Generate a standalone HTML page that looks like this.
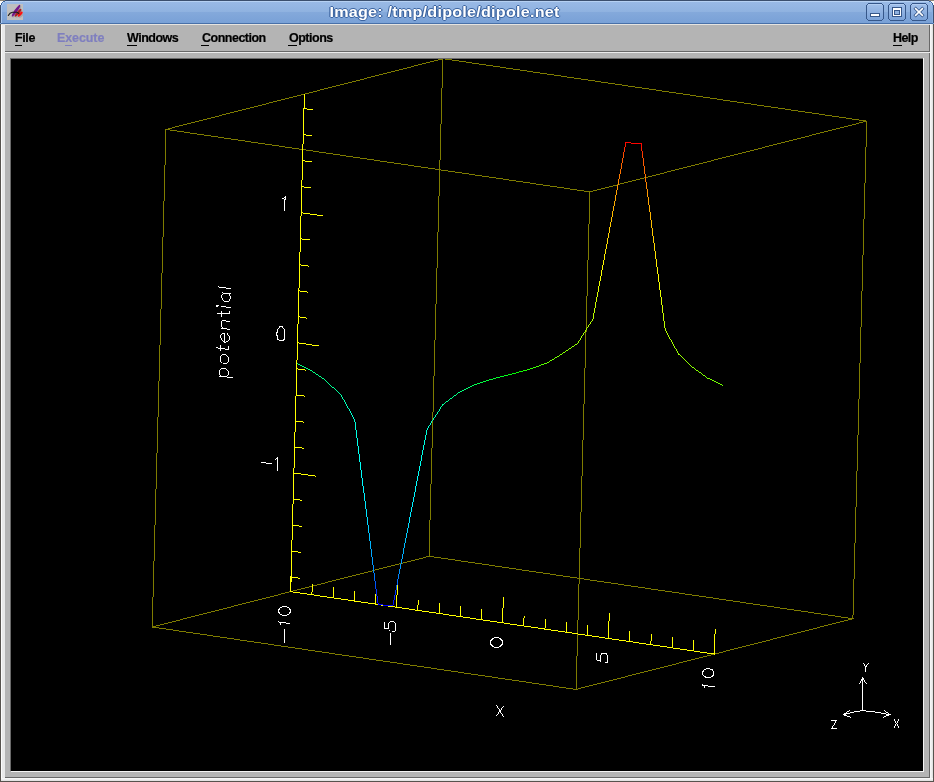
<!DOCTYPE html>
<html><head><meta charset="utf-8"><style>
*{margin:0;padding:0;box-sizing:border-box}
html,body{width:934px;height:782px;overflow:hidden;background:#b4b4b4}
body{position:relative;font-family:"Liberation Sans",sans-serif}
.abs{position:absolute}
#ttext{left:23px;width:843px;top:4px;text-align:center;color:#fff;font-weight:bold;font-size:14.5px;line-height:17px;letter-spacing:0.2px;transform:scaleX(1.115);transform-origin:center;text-shadow:1px 0 0 #3c64a0,-1px 0 0 #3c64a0,0 1px 0 #3c64a0,0 -1px 0 #3c64a0;will-change:transform}
.btn{top:3px;width:18px;height:18px;border:1px solid #37598b;border-radius:4px;background:linear-gradient(#9cbcea,#7ea5da)}
.mi{top:31px;font-weight:bold;font-size:12.5px;line-height:15px;color:#000;letter-spacing:-0.2px;-webkit-text-stroke:0.2px #000;will-change:transform}
.ul{height:1px;background:#000}
.plot{position:absolute;left:0;top:0}
</style></head><body>
<div class="abs" style="left:0px;top:23px;width:1px;height:759px;background:#57534e"></div><div class="abs" style="left:933px;top:23px;width:1px;height:759px;background:#57534e"></div><div class="abs" style="left:0px;top:781px;width:934px;height:1px;background:#57534e"></div><div class="abs" style="left:1px;top:24px;width:1px;height:757px;background:#fcfcfc"></div><div class="abs" style="left:2px;top:25px;width:3px;height:755px;background:#e9e9e9"></div><div class="abs" style="left:1px;top:24px;width:932px;height:1px;background:#e6e4e0"></div><div class="abs" style="left:930px;top:24px;width:1px;height:757px;background:#f6f6f6"></div><div class="abs" style="left:931px;top:24px;width:1px;height:757px;background:#eeeeee"></div><div class="abs" style="left:932px;top:24px;width:1px;height:757px;background:#e2e2e2"></div><div class="abs" style="left:1px;top:778px;width:932px;height:1px;background:#f6f6f6"></div><div class="abs" style="left:1px;top:779px;width:932px;height:1px;background:#eeeeee"></div><div class="abs" style="left:1px;top:780px;width:932px;height:1px;background:#e2e2e2"></div><div class="abs" style="left:929px;top:25px;width:1px;height:753px;background:#686868"></div><div class="abs" style="left:5px;top:777px;width:925px;height:1px;background:#686868"></div><div class="abs" style="left:5px;top:51px;width:924px;height:1px;background:#686868"></div><div class="abs" style="left:5px;top:52px;width:925px;height:1px;background:#ececec"></div><div class="abs" style="left:10px;top:58px;width:913px;height:1px;background:#6a6a6a"></div><div class="abs" style="left:10px;top:58px;width:1px;height:713px;background:#6a6a6a"></div><div class="abs" style="left:923px;top:58px;width:1px;height:714px;background:#f4f4f4"></div><div class="abs" style="left:11px;top:771px;width:913px;height:1px;background:#f4f4f4"></div><div class="abs" style="left:11px;top:59px;width:912px;height:712px;background:#000"></div>
<svg class="abs" style="left:0;top:0" width="934" height="24" shape-rendering="crispEdges"><defs><linearGradient id="tg" x1="0" y1="0" x2="0" y2="24" gradientUnits="userSpaceOnUse"><stop offset="0" stop-color="#9bbbe7"/><stop offset="0.5" stop-color="#8fb2e0"/><stop offset="0.5" stop-color="#84a9db"/><stop offset="1" stop-color="#78a0d6"/></linearGradient><linearGradient id="bg" x1="0" y1="4" x2="0" y2="20" gradientUnits="userSpaceOnUse"><stop offset="0" stop-color="#a2c0ea"/><stop offset="1" stop-color="#7ba2d8"/></linearGradient></defs><rect x="0" y="0" width="934" height="24" fill="url(#tg)"/><rect x="0" y="0" width="5" height="1" fill="#8c8274"/><rect x="929" y="0" width="5" height="1" fill="#8c8274"/><rect x="5" y="0" width="924" height="1" fill="#3b4f6e"/><rect x="5" y="1" width="924" height="1" fill="#b6d1f3"/><rect x="0" y="1" width="1" height="1" fill="#fbfbfa"/><rect x="933" y="1" width="1" height="1" fill="#fbfbfa"/><rect x="1" y="1" width="1" height="1" fill="#fbfbfa"/><rect x="932" y="1" width="1" height="1" fill="#fbfbfa"/><rect x="2" y="1" width="1" height="1" fill="#fbfbfa"/><rect x="931" y="1" width="1" height="1" fill="#fbfbfa"/><rect x="0" y="2" width="1" height="1" fill="#fbfbfa"/><rect x="933" y="2" width="1" height="1" fill="#fbfbfa"/><rect x="1" y="2" width="1" height="1" fill="#fbfbfa"/><rect x="932" y="2" width="1" height="1" fill="#fbfbfa"/><rect x="0" y="3" width="1" height="1" fill="#fbfbfa"/><rect x="933" y="3" width="1" height="1" fill="#fbfbfa"/><rect x="0" y="4" width="1" height="1" fill="#fbfbfa"/><rect x="933" y="4" width="1" height="1" fill="#fbfbfa"/><rect x="3" y="1" width="1" height="1" fill="#3d69a6"/><rect x="930" y="1" width="1" height="1" fill="#3d69a6"/><rect x="4" y="1" width="1" height="1" fill="#3d69a6"/><rect x="929" y="1" width="1" height="1" fill="#3d69a6"/><rect x="2" y="2" width="1" height="1" fill="#3d69a6"/><rect x="931" y="2" width="1" height="1" fill="#3d69a6"/><rect x="1" y="3" width="1" height="1" fill="#3d69a6"/><rect x="932" y="3" width="1" height="1" fill="#3d69a6"/><rect x="1" y="4" width="1" height="1" fill="#3d69a6"/><rect x="932" y="4" width="1" height="1" fill="#3d69a6"/><rect x="3" y="2" width="1" height="1" fill="#b6d1f3"/><rect x="930" y="2" width="1" height="1" fill="#b6d1f3"/><rect x="2" y="3" width="1" height="1" fill="#aac8f0"/><rect x="931" y="3" width="1" height="1" fill="#aac8f0"/><rect x="2" y="4" width="1" height="1" fill="#aac8f0"/><rect x="931" y="4" width="1" height="1" fill="#aac8f0"/><rect x="0" y="5" width="1" height="18" fill="#3b4f6e"/><rect x="933" y="5" width="1" height="18" fill="#3b4f6e"/><rect x="1" y="5" width="1" height="18" fill="#a9c7ef"/><rect x="932" y="5" width="1" height="18" fill="#86aee2"/><rect x="1" y="23" width="932" height="1" fill="#4870a8"/><rect x="867" y="4" width="16" height="16" fill="url(#bg)"/><rect x="868" y="4" width="14" height="1" fill="#b3cef2"/><rect x="868" y="3" width="14" height="1" fill="#36578a"/><rect x="868" y="20" width="14" height="1" fill="#36578a"/><rect x="866" y="5" width="1" height="14" fill="#36578a"/><rect x="883" y="5" width="1" height="14" fill="#36578a"/><rect x="867" y="4" width="1" height="1" fill="#36578a"/><rect x="882" y="4" width="1" height="1" fill="#36578a"/><rect x="867" y="19" width="1" height="1" fill="#36578a"/><rect x="882" y="19" width="1" height="1" fill="#36578a"/><rect x="889" y="4" width="16" height="16" fill="url(#bg)"/><rect x="890" y="4" width="14" height="1" fill="#b3cef2"/><rect x="890" y="3" width="14" height="1" fill="#36578a"/><rect x="890" y="20" width="14" height="1" fill="#36578a"/><rect x="888" y="5" width="1" height="14" fill="#36578a"/><rect x="905" y="5" width="1" height="14" fill="#36578a"/><rect x="889" y="4" width="1" height="1" fill="#36578a"/><rect x="904" y="4" width="1" height="1" fill="#36578a"/><rect x="889" y="19" width="1" height="1" fill="#36578a"/><rect x="904" y="19" width="1" height="1" fill="#36578a"/><rect x="911" y="4" width="16" height="16" fill="url(#bg)"/><rect x="912" y="4" width="14" height="1" fill="#b3cef2"/><rect x="912" y="3" width="14" height="1" fill="#36578a"/><rect x="912" y="20" width="14" height="1" fill="#36578a"/><rect x="910" y="5" width="1" height="14" fill="#36578a"/><rect x="927" y="5" width="1" height="14" fill="#36578a"/><rect x="911" y="4" width="1" height="1" fill="#36578a"/><rect x="926" y="4" width="1" height="1" fill="#36578a"/><rect x="911" y="19" width="1" height="1" fill="#36578a"/><rect x="926" y="19" width="1" height="1" fill="#36578a"/><rect x="870" y="13" width="10" height="4" fill="#36578a"/><rect x="871" y="14" width="8" height="2" fill="#ffffff"/><rect x="892" y="7" width="10" height="10" fill="#36578a"/><rect x="893" y="8" width="8" height="8" fill="#ffffff"/><rect x="894" y="10" width="6" height="5" fill="#36578a"/><rect x="895" y="11" width="4" height="3" fill="#8fb1df"/><g shape-rendering="auto"><path d="M914.6 7.6 L923.4 16.4 M923.4 7.6 L914.6 16.4" stroke="#36578a" stroke-width="3.2"/><path d="M915.1 8.1 L922.9 15.9 M922.9 8.1 L915.1 15.9" stroke="#fff" stroke-width="1.6"/></g></svg>
<div class="abs" style="left:7px;top:4px;width:16px;height:16px;background:#bfbfbf">
<svg width="16" height="16" viewBox="0 0 16 16"><ellipse cx="9.90" cy="7.80" rx="7.12" ry="1.75" fill="#8a8a8a" opacity="0.45" transform="rotate(125.6 9.90 7.80)"/><ellipse cx="11.95" cy="9.85" rx="4.86" ry="1.65" fill="#8a8a8a" opacity="0.45" transform="rotate(130.2 11.95 9.85)"/><ellipse cx="14.10" cy="11.25" rx="3.18" ry="1.60" fill="#8a8a8a" opacity="0.45" transform="rotate(134.2 14.10 11.25)"/><ellipse cx="9.00" cy="6.70" rx="7.12" ry="1.45" fill="#74168a" opacity="1" transform="rotate(125.6 9.00 6.70)"/><ellipse cx="11.05" cy="8.75" rx="4.86" ry="1.35" fill="#a81c1c" opacity="1" transform="rotate(130.2 11.05 8.75)"/><ellipse cx="13.20" cy="10.15" rx="3.18" ry="1.30" fill="#ff1010" opacity="1" transform="rotate(134.2 13.20 10.15)"/><path d="M1.3 11.5 C2.3 9.4 3.6 8.4 5.5 8.2 L9.6 8.3 C10.8 8.5 11.5 9.0 12.0 9.8" stroke="#1c1c1c" stroke-width="1.1" fill="none" stroke-linecap="round"/></svg></div>
<div id="ttext" class="abs">Image: /tmp/dipole/dipole.net</div>
<div class="mi abs" style="left:15px;letter-spacing:-0.4px">File</div>
<div class="ul abs" style="left:15px;top:45px;width:7px"></div>
<div class="mi abs" style="left:57px;letter-spacing:-0.1px;color:#7f7fbf;-webkit-text-stroke:0.2px #7f7fbf">Execute</div>
<div class="ul abs" style="left:65px;top:45px;width:7px;background:#7f7fbf"></div>
<div class="mi abs" style="left:127px;letter-spacing:-0.5px">Windows</div>
<div class="ul abs" style="left:127px;top:45px;width:10px"></div>
<div class="mi abs" style="left:202px;letter-spacing:-0.5px">Connection</div>
<div class="ul abs" style="left:201px;top:45px;width:8px"></div>
<div class="mi abs" style="left:289px;letter-spacing:-0.5px">Options</div>
<div class="ul abs" style="left:288px;top:45px;width:9px"></div>
<div class="mi abs" style="left:893px;letter-spacing:-0.6px">Help</div>
<div class="ul abs" style="left:893px;top:45px;width:9px"></div>
<svg class="plot" width="934" height="782" viewBox="0 0 934 782"><defs><clipPath id="cv"><rect x="11" y="59" width="912" height="712"/></clipPath></defs><g clip-path="url(#cv)" shape-rendering="crispEdges"><path fill="#7f7c00" d="M442 58h3v1h-3zM438 59h5v1h-5zM445 59h7v1h-7zM434 60h4v1h-4zM442 60h1v1h-1zM452 60h7v1h-7zM430 61h4v1h-4zM442 61h1v1h-1zM459 61h7v1h-7zM426 62h4v1h-4zM442 62h1v1h-1zM466 62h6v1h-6zM422 63h4v1h-4zM442 63h1v1h-1zM472 63h7v1h-7zM418 64h4v1h-4zM442 64h1v1h-1zM479 64h7v1h-7zM414 65h4v1h-4zM442 65h1v1h-1zM486 65h7v1h-7zM411 66h3v1h-3zM442 66h1v1h-1zM493 66h7v1h-7zM407 67h4v1h-4zM442 67h1v1h-1zM500 67h6v1h-6zM403 68h4v1h-4zM442 68h1v1h-1zM506 68h7v1h-7zM399 69h4v1h-4zM442 69h1v1h-1zM513 69h7v1h-7zM395 70h4v1h-4zM442 70h1v1h-1zM520 70h7v1h-7zM391 71h4v1h-4zM442 71h1v1h-1zM527 71h6v1h-6zM387 72h4v1h-4zM442 72h1v1h-1zM533 72h7v1h-7zM383 73h4v1h-4zM442 73h1v1h-1zM540 73h7v1h-7zM379 74h4v1h-4zM442 74h1v1h-1zM547 74h7v1h-7zM375 75h4v1h-4zM442 75h1v1h-1zM554 75h7v1h-7zM371 76h4v1h-4zM442 76h1v1h-1zM561 76h6v1h-6zM367 77h4v1h-4zM442 77h1v1h-1zM567 77h7v1h-7zM364 78h3v1h-3zM442 78h1v1h-1zM574 78h7v1h-7zM360 79h4v1h-4zM442 79h1v1h-1zM581 79h7v1h-7zM356 80h4v1h-4zM442 80h1v1h-1zM588 80h7v1h-7zM352 81h4v1h-4zM442 81h1v1h-1zM595 81h6v1h-6zM348 82h4v1h-4zM442 82h1v1h-1zM601 82h7v1h-7zM344 83h4v1h-4zM442 83h1v1h-1zM608 83h7v1h-7zM340 84h4v1h-4zM442 84h1v1h-1zM615 84h7v1h-7zM336 85h4v1h-4zM442 85h1v1h-1zM622 85h6v1h-6zM332 86h4v1h-4zM442 86h1v1h-1zM628 86h7v1h-7zM328 87h4v1h-4zM442 87h1v1h-1zM635 87h7v1h-7zM324 88h4v1h-4zM441 88h1v1h-1zM642 88h7v1h-7zM320 89h4v1h-4zM441 89h1v1h-1zM649 89h7v1h-7zM317 90h3v1h-3zM441 90h1v1h-1zM656 90h6v1h-6zM313 91h4v1h-4zM441 91h1v1h-1zM662 91h7v1h-7zM309 92h4v1h-4zM441 92h1v1h-1zM669 92h7v1h-7zM305 93h4v1h-4zM441 93h1v1h-1zM676 93h7v1h-7zM301 94h4v1h-4zM441 94h1v1h-1zM683 94h7v1h-7zM297 95h4v1h-4zM441 95h1v1h-1zM690 95h6v1h-6zM293 96h4v1h-4zM441 96h1v1h-1zM696 96h7v1h-7zM289 97h4v1h-4zM441 97h1v1h-1zM703 97h7v1h-7zM285 98h4v1h-4zM441 98h1v1h-1zM710 98h7v1h-7zM281 99h4v1h-4zM441 99h1v1h-1zM717 99h6v1h-6zM277 100h4v1h-4zM441 100h1v1h-1zM723 100h7v1h-7zM273 101h4v1h-4zM441 101h1v1h-1zM730 101h7v1h-7zM269 102h4v1h-4zM441 102h1v1h-1zM737 102h7v1h-7zM266 103h3v1h-3zM441 103h1v1h-1zM744 103h7v1h-7zM262 104h4v1h-4zM441 104h1v1h-1zM751 104h6v1h-6zM258 105h4v1h-4zM441 105h1v1h-1zM757 105h7v1h-7zM254 106h4v1h-4zM441 106h1v1h-1zM764 106h7v1h-7zM250 107h4v1h-4zM441 107h1v1h-1zM771 107h7v1h-7zM246 108h4v1h-4zM441 108h1v1h-1zM778 108h7v1h-7zM242 109h4v1h-4zM441 109h1v1h-1zM785 109h6v1h-6zM238 110h4v1h-4zM441 110h1v1h-1zM791 110h7v1h-7zM234 111h4v1h-4zM441 111h1v1h-1zM798 111h7v1h-7zM230 112h4v1h-4zM441 112h1v1h-1zM805 112h7v1h-7zM226 113h4v1h-4zM441 113h1v1h-1zM812 113h7v1h-7zM222 114h4v1h-4zM441 114h1v1h-1zM819 114h6v1h-6zM219 115h3v1h-3zM441 115h1v1h-1zM825 115h7v1h-7zM215 116h4v1h-4zM441 116h1v1h-1zM832 116h7v1h-7zM211 117h4v1h-4zM441 117h1v1h-1zM839 117h7v1h-7zM207 118h4v1h-4zM441 118h1v1h-1zM846 118h6v1h-6zM203 119h4v1h-4zM441 119h1v1h-1zM852 119h7v1h-7zM199 120h4v1h-4zM441 120h1v1h-1zM859 120h7v1h-7zM195 121h4v1h-4zM441 121h1v1h-1zM863 121h4v1h-4zM191 122h4v1h-4zM441 122h1v1h-1zM859 122h4v1h-4zM866 122h1v1h-1zM187 123h4v1h-4zM441 123h1v1h-1zM856 123h3v1h-3zM866 123h1v1h-1zM183 124h4v1h-4zM440 124h1v1h-1zM852 124h4v1h-4zM866 124h1v1h-1zM179 125h4v1h-4zM440 125h1v1h-1zM848 125h4v1h-4zM866 125h1v1h-1zM175 126h4v1h-4zM440 126h1v1h-1zM844 126h4v1h-4zM866 126h1v1h-1zM172 127h3v1h-3zM440 127h1v1h-1zM840 127h4v1h-4zM866 127h1v1h-1zM168 128h4v1h-4zM440 128h1v1h-1zM836 128h4v1h-4zM866 128h1v1h-1zM165 129h5v1h-5zM440 129h1v1h-1zM832 129h4v1h-4zM866 129h1v1h-1zM165 130h1v1h-1zM170 130h7v1h-7zM440 130h1v1h-1zM828 130h4v1h-4zM866 130h1v1h-1zM165 131h1v1h-1zM177 131h7v1h-7zM440 131h1v1h-1zM824 131h4v1h-4zM866 131h1v1h-1zM165 132h1v1h-1zM184 132h6v1h-6zM440 132h1v1h-1zM820 132h4v1h-4zM866 132h1v1h-1zM165 133h1v1h-1zM190 133h7v1h-7zM440 133h1v1h-1zM816 133h4v1h-4zM866 133h1v1h-1zM165 134h1v1h-1zM197 134h7v1h-7zM440 134h1v1h-1zM812 134h4v1h-4zM866 134h1v1h-1zM165 135h1v1h-1zM204 135h7v1h-7zM440 135h1v1h-1zM809 135h3v1h-3zM866 135h1v1h-1zM165 136h1v1h-1zM211 136h7v1h-7zM440 136h1v1h-1zM805 136h4v1h-4zM866 136h1v1h-1zM165 137h1v1h-1zM218 137h6v1h-6zM440 137h1v1h-1zM801 137h4v1h-4zM866 137h1v1h-1zM165 138h1v1h-1zM224 138h7v1h-7zM440 138h1v1h-1zM797 138h4v1h-4zM866 138h1v1h-1zM165 139h1v1h-1zM231 139h7v1h-7zM440 139h1v1h-1zM793 139h4v1h-4zM866 139h1v1h-1zM165 140h1v1h-1zM238 140h7v1h-7zM440 140h1v1h-1zM789 140h4v1h-4zM866 140h1v1h-1zM165 141h1v1h-1zM245 141h6v1h-6zM440 141h1v1h-1zM785 141h4v1h-4zM866 141h1v1h-1zM165 142h1v1h-1zM251 142h7v1h-7zM440 142h1v1h-1zM781 142h4v1h-4zM866 142h1v1h-1zM165 143h1v1h-1zM258 143h7v1h-7zM440 143h1v1h-1zM777 143h4v1h-4zM866 143h1v1h-1zM165 144h1v1h-1zM265 144h7v1h-7zM440 144h1v1h-1zM773 144h4v1h-4zM866 144h1v1h-1zM165 145h1v1h-1zM272 145h7v1h-7zM440 145h1v1h-1zM769 145h4v1h-4zM866 145h1v1h-1zM165 146h1v1h-1zM279 146h6v1h-6zM440 146h1v1h-1zM765 146h4v1h-4zM866 146h1v1h-1zM165 147h1v1h-1zM285 147h7v1h-7zM440 147h1v1h-1zM762 147h3v1h-3zM865 147h1v1h-1zM165 148h1v1h-1zM292 148h7v1h-7zM440 148h1v1h-1zM758 148h4v1h-4zM865 148h1v1h-1zM165 149h1v1h-1zM299 149h7v1h-7zM440 149h1v1h-1zM754 149h4v1h-4zM865 149h1v1h-1zM165 150h1v1h-1zM306 150h7v1h-7zM440 150h1v1h-1zM750 150h4v1h-4zM865 150h1v1h-1zM165 151h1v1h-1zM313 151h6v1h-6zM440 151h1v1h-1zM746 151h4v1h-4zM865 151h1v1h-1zM165 152h1v1h-1zM319 152h7v1h-7zM440 152h1v1h-1zM742 152h4v1h-4zM865 152h1v1h-1zM165 153h1v1h-1zM326 153h7v1h-7zM440 153h1v1h-1zM738 153h4v1h-4zM865 153h1v1h-1zM165 154h1v1h-1zM333 154h7v1h-7zM440 154h1v1h-1zM734 154h4v1h-4zM865 154h1v1h-1zM165 155h1v1h-1zM340 155h6v1h-6zM440 155h1v1h-1zM730 155h4v1h-4zM865 155h1v1h-1zM165 156h1v1h-1zM346 156h7v1h-7zM440 156h1v1h-1zM726 156h4v1h-4zM865 156h1v1h-1zM165 157h1v1h-1zM353 157h7v1h-7zM440 157h1v1h-1zM722 157h4v1h-4zM865 157h1v1h-1zM165 158h1v1h-1zM360 158h7v1h-7zM440 158h1v1h-1zM718 158h4v1h-4zM865 158h1v1h-1zM165 159h1v1h-1zM367 159h7v1h-7zM440 159h1v1h-1zM714 159h4v1h-4zM865 159h1v1h-1zM165 160h1v1h-1zM374 160h6v1h-6zM439 160h1v1h-1zM711 160h3v1h-3zM865 160h1v1h-1zM165 161h1v1h-1zM380 161h7v1h-7zM439 161h1v1h-1zM707 161h4v1h-4zM865 161h1v1h-1zM165 162h1v1h-1zM387 162h7v1h-7zM439 162h1v1h-1zM703 162h4v1h-4zM865 162h1v1h-1zM165 163h1v1h-1zM394 163h7v1h-7zM439 163h1v1h-1zM699 163h4v1h-4zM865 163h1v1h-1zM165 164h1v1h-1zM401 164h7v1h-7zM439 164h1v1h-1zM695 164h4v1h-4zM865 164h1v1h-1zM164 165h1v1h-1zM408 165h6v1h-6zM439 165h1v1h-1zM691 165h4v1h-4zM865 165h1v1h-1zM164 166h1v1h-1zM414 166h7v1h-7zM439 166h1v1h-1zM687 166h4v1h-4zM865 166h1v1h-1zM164 167h1v1h-1zM421 167h7v1h-7zM439 167h1v1h-1zM683 167h4v1h-4zM865 167h1v1h-1zM164 168h1v1h-1zM428 168h7v1h-7zM439 168h1v1h-1zM679 168h4v1h-4zM865 168h1v1h-1zM164 169h1v1h-1zM435 169h6v1h-6zM675 169h4v1h-4zM865 169h1v1h-1zM164 170h1v1h-1zM439 170h1v1h-1zM441 170h7v1h-7zM671 170h4v1h-4zM865 170h1v1h-1zM164 171h1v1h-1zM439 171h1v1h-1zM448 171h7v1h-7zM667 171h4v1h-4zM865 171h1v1h-1zM164 172h1v1h-1zM439 172h1v1h-1zM455 172h7v1h-7zM664 172h3v1h-3zM865 172h1v1h-1zM164 173h1v1h-1zM439 173h1v1h-1zM462 173h7v1h-7zM660 173h4v1h-4zM865 173h1v1h-1zM164 174h1v1h-1zM439 174h1v1h-1zM469 174h6v1h-6zM656 174h4v1h-4zM865 174h1v1h-1zM164 175h1v1h-1zM439 175h1v1h-1zM475 175h7v1h-7zM652 175h4v1h-4zM865 175h1v1h-1zM164 176h1v1h-1zM439 176h1v1h-1zM482 176h7v1h-7zM648 176h4v1h-4zM865 176h1v1h-1zM164 177h1v1h-1zM439 177h1v1h-1zM489 177h7v1h-7zM644 177h4v1h-4zM865 177h1v1h-1zM164 178h1v1h-1zM439 178h1v1h-1zM496 178h7v1h-7zM640 178h4v1h-4zM865 178h1v1h-1zM164 179h1v1h-1zM439 179h1v1h-1zM503 179h6v1h-6zM636 179h4v1h-4zM865 179h1v1h-1zM164 180h1v1h-1zM439 180h1v1h-1zM509 180h7v1h-7zM632 180h4v1h-4zM865 180h1v1h-1zM164 181h1v1h-1zM439 181h1v1h-1zM516 181h7v1h-7zM628 181h4v1h-4zM865 181h1v1h-1zM164 182h1v1h-1zM439 182h1v1h-1zM523 182h7v1h-7zM624 182h4v1h-4zM865 182h1v1h-1zM164 183h1v1h-1zM439 183h1v1h-1zM530 183h6v1h-6zM620 183h4v1h-4zM864 183h1v1h-1zM164 184h1v1h-1zM439 184h1v1h-1zM536 184h7v1h-7zM617 184h3v1h-3zM864 184h1v1h-1zM164 185h1v1h-1zM439 185h1v1h-1zM543 185h7v1h-7zM613 185h4v1h-4zM864 185h1v1h-1zM164 186h1v1h-1zM439 186h1v1h-1zM550 186h7v1h-7zM609 186h4v1h-4zM864 186h1v1h-1zM164 187h1v1h-1zM439 187h1v1h-1zM557 187h7v1h-7zM605 187h4v1h-4zM864 187h1v1h-1zM164 188h1v1h-1zM439 188h1v1h-1zM564 188h6v1h-6zM601 188h4v1h-4zM864 188h1v1h-1zM164 189h1v1h-1zM439 189h1v1h-1zM570 189h7v1h-7zM597 189h4v1h-4zM864 189h1v1h-1zM164 190h1v1h-1zM439 190h1v1h-1zM577 190h7v1h-7zM593 190h4v1h-4zM864 190h1v1h-1zM164 191h1v1h-1zM439 191h1v1h-1zM584 191h9v1h-9zM864 191h1v1h-1zM164 192h1v1h-1zM439 192h1v1h-1zM589 192h1v1h-1zM864 192h1v1h-1zM164 193h1v1h-1zM439 193h1v1h-1zM589 193h1v1h-1zM864 193h1v1h-1zM164 194h1v1h-1zM439 194h1v1h-1zM589 194h1v1h-1zM864 194h1v1h-1zM164 195h1v1h-1zM439 195h1v1h-1zM589 195h1v1h-1zM864 195h1v1h-1zM164 196h1v1h-1zM438 196h1v1h-1zM589 196h1v1h-1zM864 196h1v1h-1zM164 197h1v1h-1zM438 197h1v1h-1zM589 197h1v1h-1zM864 197h1v1h-1zM164 198h1v1h-1zM438 198h1v1h-1zM589 198h1v1h-1zM864 198h1v1h-1zM164 199h1v1h-1zM438 199h1v1h-1zM589 199h1v1h-1zM864 199h1v1h-1zM164 200h1v1h-1zM438 200h1v1h-1zM589 200h1v1h-1zM864 200h1v1h-1zM163 201h1v1h-1zM438 201h1v1h-1zM589 201h1v1h-1zM864 201h1v1h-1zM163 202h1v1h-1zM438 202h1v1h-1zM589 202h1v1h-1zM864 202h1v1h-1zM163 203h1v1h-1zM438 203h1v1h-1zM589 203h1v1h-1zM864 203h1v1h-1zM163 204h1v1h-1zM438 204h1v1h-1zM589 204h1v1h-1zM864 204h1v1h-1zM163 205h1v1h-1zM438 205h1v1h-1zM589 205h1v1h-1zM864 205h1v1h-1zM163 206h1v1h-1zM438 206h1v1h-1zM589 206h1v1h-1zM864 206h1v1h-1zM163 207h1v1h-1zM438 207h1v1h-1zM589 207h1v1h-1zM864 207h1v1h-1zM163 208h1v1h-1zM438 208h1v1h-1zM589 208h1v1h-1zM864 208h1v1h-1zM163 209h1v1h-1zM438 209h1v1h-1zM589 209h1v1h-1zM864 209h1v1h-1zM163 210h1v1h-1zM438 210h1v1h-1zM589 210h1v1h-1zM864 210h1v1h-1zM163 211h1v1h-1zM438 211h1v1h-1zM589 211h1v1h-1zM864 211h1v1h-1zM163 212h1v1h-1zM438 212h1v1h-1zM589 212h1v1h-1zM864 212h1v1h-1zM163 213h1v1h-1zM438 213h1v1h-1zM589 213h1v1h-1zM864 213h1v1h-1zM163 214h1v1h-1zM438 214h1v1h-1zM589 214h1v1h-1zM864 214h1v1h-1zM163 215h1v1h-1zM438 215h1v1h-1zM589 215h1v1h-1zM864 215h1v1h-1zM163 216h1v1h-1zM438 216h1v1h-1zM589 216h1v1h-1zM864 216h1v1h-1zM163 217h1v1h-1zM438 217h1v1h-1zM589 217h1v1h-1zM864 217h1v1h-1zM163 218h1v1h-1zM438 218h1v1h-1zM589 218h1v1h-1zM864 218h1v1h-1zM163 219h1v1h-1zM438 219h1v1h-1zM589 219h1v1h-1zM863 219h1v1h-1zM163 220h1v1h-1zM438 220h1v1h-1zM589 220h1v1h-1zM863 220h1v1h-1zM163 221h1v1h-1zM438 221h1v1h-1zM589 221h1v1h-1zM863 221h1v1h-1zM163 222h1v1h-1zM438 222h1v1h-1zM589 222h1v1h-1zM863 222h1v1h-1zM163 223h1v1h-1zM438 223h1v1h-1zM589 223h1v1h-1zM863 223h1v1h-1zM163 224h1v1h-1zM438 224h1v1h-1zM588 224h1v1h-1zM863 224h1v1h-1zM163 225h1v1h-1zM438 225h1v1h-1zM588 225h1v1h-1zM863 225h1v1h-1zM163 226h1v1h-1zM438 226h1v1h-1zM588 226h1v1h-1zM863 226h1v1h-1zM163 227h1v1h-1zM438 227h1v1h-1zM588 227h1v1h-1zM863 227h1v1h-1zM163 228h1v1h-1zM438 228h1v1h-1zM588 228h1v1h-1zM863 228h1v1h-1zM163 229h1v1h-1zM438 229h1v1h-1zM588 229h1v1h-1zM863 229h1v1h-1zM163 230h1v1h-1zM438 230h1v1h-1zM588 230h1v1h-1zM863 230h1v1h-1zM163 231h1v1h-1zM438 231h1v1h-1zM588 231h1v1h-1zM863 231h1v1h-1zM163 232h1v1h-1zM437 232h1v1h-1zM588 232h1v1h-1zM863 232h1v1h-1zM163 233h1v1h-1zM437 233h1v1h-1zM588 233h1v1h-1zM863 233h1v1h-1zM163 234h1v1h-1zM437 234h1v1h-1zM588 234h1v1h-1zM863 234h1v1h-1zM163 235h1v1h-1zM437 235h1v1h-1zM588 235h1v1h-1zM863 235h1v1h-1zM163 236h1v1h-1zM437 236h1v1h-1zM588 236h1v1h-1zM863 236h1v1h-1zM162 237h1v1h-1zM437 237h1v1h-1zM588 237h1v1h-1zM863 237h1v1h-1zM162 238h1v1h-1zM437 238h1v1h-1zM588 238h1v1h-1zM863 238h1v1h-1zM162 239h1v1h-1zM437 239h1v1h-1zM588 239h1v1h-1zM863 239h1v1h-1zM162 240h1v1h-1zM437 240h1v1h-1zM588 240h1v1h-1zM863 240h1v1h-1zM162 241h1v1h-1zM437 241h1v1h-1zM588 241h1v1h-1zM863 241h1v1h-1zM162 242h1v1h-1zM437 242h1v1h-1zM588 242h1v1h-1zM863 242h1v1h-1zM162 243h1v1h-1zM437 243h1v1h-1zM588 243h1v1h-1zM863 243h1v1h-1zM162 244h1v1h-1zM437 244h1v1h-1zM588 244h1v1h-1zM863 244h1v1h-1zM162 245h1v1h-1zM437 245h1v1h-1zM588 245h1v1h-1zM863 245h1v1h-1zM162 246h1v1h-1zM437 246h1v1h-1zM588 246h1v1h-1zM863 246h1v1h-1zM162 247h1v1h-1zM437 247h1v1h-1zM588 247h1v1h-1zM863 247h1v1h-1zM162 248h1v1h-1zM437 248h1v1h-1zM588 248h1v1h-1zM863 248h1v1h-1zM162 249h1v1h-1zM437 249h1v1h-1zM588 249h1v1h-1zM863 249h1v1h-1zM162 250h1v1h-1zM437 250h1v1h-1zM588 250h1v1h-1zM863 250h1v1h-1zM162 251h1v1h-1zM437 251h1v1h-1zM588 251h1v1h-1zM863 251h1v1h-1zM162 252h1v1h-1zM437 252h1v1h-1zM588 252h1v1h-1zM863 252h1v1h-1zM162 253h1v1h-1zM437 253h1v1h-1zM588 253h1v1h-1zM863 253h1v1h-1zM162 254h1v1h-1zM437 254h1v1h-1zM588 254h1v1h-1zM863 254h1v1h-1zM162 255h1v1h-1zM437 255h1v1h-1zM588 255h1v1h-1zM862 255h1v1h-1zM162 256h1v1h-1zM437 256h1v1h-1zM588 256h1v1h-1zM862 256h1v1h-1zM162 257h1v1h-1zM437 257h1v1h-1zM588 257h1v1h-1zM862 257h1v1h-1zM162 258h1v1h-1zM437 258h1v1h-1zM588 258h1v1h-1zM862 258h1v1h-1zM162 259h1v1h-1zM437 259h1v1h-1zM588 259h1v1h-1zM862 259h1v1h-1zM162 260h1v1h-1zM437 260h1v1h-1zM587 260h1v1h-1zM862 260h1v1h-1zM162 261h1v1h-1zM437 261h1v1h-1zM587 261h1v1h-1zM862 261h1v1h-1zM162 262h1v1h-1zM437 262h1v1h-1zM587 262h1v1h-1zM862 262h1v1h-1zM162 263h1v1h-1zM437 263h1v1h-1zM587 263h1v1h-1zM862 263h1v1h-1zM162 264h1v1h-1zM437 264h1v1h-1zM587 264h1v1h-1zM862 264h1v1h-1zM162 265h1v1h-1zM437 265h1v1h-1zM587 265h1v1h-1zM862 265h1v1h-1zM162 266h1v1h-1zM437 266h1v1h-1zM587 266h1v1h-1zM862 266h1v1h-1zM162 267h1v1h-1zM437 267h1v1h-1zM587 267h1v1h-1zM862 267h1v1h-1zM162 268h1v1h-1zM436 268h1v1h-1zM587 268h1v1h-1zM862 268h1v1h-1zM162 269h1v1h-1zM436 269h1v1h-1zM587 269h1v1h-1zM862 269h1v1h-1zM162 270h1v1h-1zM436 270h1v1h-1zM587 270h1v1h-1zM862 270h1v1h-1zM162 271h1v1h-1zM436 271h1v1h-1zM587 271h1v1h-1zM862 271h1v1h-1zM162 272h1v1h-1zM436 272h1v1h-1zM587 272h1v1h-1zM862 272h1v1h-1zM161 273h1v1h-1zM436 273h1v1h-1zM587 273h1v1h-1zM862 273h1v1h-1zM161 274h1v1h-1zM436 274h1v1h-1zM587 274h1v1h-1zM862 274h1v1h-1zM161 275h1v1h-1zM436 275h1v1h-1zM587 275h1v1h-1zM862 275h1v1h-1zM161 276h1v1h-1zM436 276h1v1h-1zM587 276h1v1h-1zM862 276h1v1h-1zM161 277h1v1h-1zM436 277h1v1h-1zM587 277h1v1h-1zM862 277h1v1h-1zM161 278h1v1h-1zM436 278h1v1h-1zM587 278h1v1h-1zM862 278h1v1h-1zM161 279h1v1h-1zM436 279h1v1h-1zM587 279h1v1h-1zM862 279h1v1h-1zM161 280h1v1h-1zM436 280h1v1h-1zM587 280h1v1h-1zM862 280h1v1h-1zM161 281h1v1h-1zM436 281h1v1h-1zM587 281h1v1h-1zM862 281h1v1h-1zM161 282h1v1h-1zM436 282h1v1h-1zM587 282h1v1h-1zM862 282h1v1h-1zM161 283h1v1h-1zM436 283h1v1h-1zM587 283h1v1h-1zM862 283h1v1h-1zM161 284h1v1h-1zM436 284h1v1h-1zM587 284h1v1h-1zM862 284h1v1h-1zM161 285h1v1h-1zM436 285h1v1h-1zM587 285h1v1h-1zM862 285h1v1h-1zM161 286h1v1h-1zM436 286h1v1h-1zM587 286h1v1h-1zM862 286h1v1h-1zM161 287h1v1h-1zM436 287h1v1h-1zM587 287h1v1h-1zM862 287h1v1h-1zM161 288h1v1h-1zM436 288h1v1h-1zM587 288h1v1h-1zM862 288h1v1h-1zM161 289h1v1h-1zM436 289h1v1h-1zM587 289h1v1h-1zM862 289h1v1h-1zM161 290h1v1h-1zM436 290h1v1h-1zM587 290h1v1h-1zM862 290h1v1h-1zM161 291h1v1h-1zM436 291h1v1h-1zM587 291h1v1h-1zM861 291h1v1h-1zM161 292h1v1h-1zM436 292h1v1h-1zM587 292h1v1h-1zM861 292h1v1h-1zM161 293h1v1h-1zM436 293h1v1h-1zM587 293h1v1h-1zM861 293h1v1h-1zM161 294h1v1h-1zM436 294h1v1h-1zM587 294h1v1h-1zM861 294h1v1h-1zM161 295h1v1h-1zM436 295h1v1h-1zM587 295h1v1h-1zM861 295h1v1h-1zM161 296h1v1h-1zM436 296h1v1h-1zM586 296h1v1h-1zM861 296h1v1h-1zM161 297h1v1h-1zM436 297h1v1h-1zM586 297h1v1h-1zM861 297h1v1h-1zM161 298h1v1h-1zM436 298h1v1h-1zM586 298h1v1h-1zM861 298h1v1h-1zM161 299h1v1h-1zM436 299h1v1h-1zM586 299h1v1h-1zM861 299h1v1h-1zM161 300h1v1h-1zM436 300h1v1h-1zM586 300h1v1h-1zM861 300h1v1h-1zM161 301h1v1h-1zM436 301h1v1h-1zM586 301h1v1h-1zM861 301h1v1h-1zM161 302h1v1h-1zM436 302h1v1h-1zM586 302h1v1h-1zM861 302h1v1h-1zM161 303h1v1h-1zM436 303h1v1h-1zM586 303h1v1h-1zM861 303h1v1h-1zM161 304h1v1h-1zM435 304h1v1h-1zM586 304h1v1h-1zM861 304h1v1h-1zM161 305h1v1h-1zM435 305h1v1h-1zM586 305h1v1h-1zM861 305h1v1h-1zM161 306h1v1h-1zM435 306h1v1h-1zM586 306h1v1h-1zM861 306h1v1h-1zM161 307h1v1h-1zM435 307h1v1h-1zM586 307h1v1h-1zM861 307h1v1h-1zM161 308h1v1h-1zM435 308h1v1h-1zM586 308h1v1h-1zM861 308h1v1h-1zM160 309h1v1h-1zM435 309h1v1h-1zM586 309h1v1h-1zM861 309h1v1h-1zM160 310h1v1h-1zM435 310h1v1h-1zM586 310h1v1h-1zM861 310h1v1h-1zM160 311h1v1h-1zM435 311h1v1h-1zM586 311h1v1h-1zM861 311h1v1h-1zM160 312h1v1h-1zM435 312h1v1h-1zM586 312h1v1h-1zM861 312h1v1h-1zM160 313h1v1h-1zM435 313h1v1h-1zM586 313h1v1h-1zM861 313h1v1h-1zM160 314h1v1h-1zM435 314h1v1h-1zM586 314h1v1h-1zM861 314h1v1h-1zM160 315h1v1h-1zM435 315h1v1h-1zM586 315h1v1h-1zM861 315h1v1h-1zM160 316h1v1h-1zM435 316h1v1h-1zM586 316h1v1h-1zM861 316h1v1h-1zM160 317h1v1h-1zM435 317h1v1h-1zM586 317h1v1h-1zM861 317h1v1h-1zM160 318h1v1h-1zM435 318h1v1h-1zM586 318h1v1h-1zM861 318h1v1h-1zM160 319h1v1h-1zM435 319h1v1h-1zM586 319h1v1h-1zM861 319h1v1h-1zM160 320h1v1h-1zM435 320h1v1h-1zM586 320h1v1h-1zM861 320h1v1h-1zM160 321h1v1h-1zM435 321h1v1h-1zM586 321h1v1h-1zM861 321h1v1h-1zM160 322h1v1h-1zM435 322h1v1h-1zM586 322h1v1h-1zM861 322h1v1h-1zM160 323h1v1h-1zM435 323h1v1h-1zM586 323h1v1h-1zM861 323h1v1h-1zM160 324h1v1h-1zM435 324h1v1h-1zM586 324h1v1h-1zM861 324h1v1h-1zM160 325h1v1h-1zM435 325h1v1h-1zM586 325h1v1h-1zM861 325h1v1h-1zM160 326h1v1h-1zM435 326h1v1h-1zM586 326h1v1h-1zM861 326h1v1h-1zM160 327h1v1h-1zM435 327h1v1h-1zM586 327h1v1h-1zM860 327h1v1h-1zM160 328h1v1h-1zM435 328h1v1h-1zM586 328h1v1h-1zM860 328h1v1h-1zM160 329h1v1h-1zM435 329h1v1h-1zM586 329h1v1h-1zM860 329h1v1h-1zM160 330h1v1h-1zM435 330h1v1h-1zM586 330h1v1h-1zM860 330h1v1h-1zM160 331h1v1h-1zM435 331h1v1h-1zM586 331h1v1h-1zM860 331h1v1h-1zM160 332h1v1h-1zM435 332h1v1h-1zM585 332h1v1h-1zM860 332h1v1h-1zM160 333h1v1h-1zM435 333h1v1h-1zM585 333h1v1h-1zM860 333h1v1h-1zM160 334h1v1h-1zM435 334h1v1h-1zM585 334h1v1h-1zM860 334h1v1h-1zM160 335h1v1h-1zM435 335h1v1h-1zM585 335h1v1h-1zM860 335h1v1h-1zM160 336h1v1h-1zM435 336h1v1h-1zM585 336h1v1h-1zM860 336h1v1h-1zM160 337h1v1h-1zM435 337h1v1h-1zM585 337h1v1h-1zM860 337h1v1h-1zM160 338h1v1h-1zM435 338h1v1h-1zM585 338h1v1h-1zM860 338h1v1h-1zM160 339h1v1h-1zM435 339h1v1h-1zM585 339h1v1h-1zM860 339h1v1h-1zM160 340h1v1h-1zM434 340h1v1h-1zM585 340h1v1h-1zM860 340h1v1h-1zM160 341h1v1h-1zM434 341h1v1h-1zM585 341h1v1h-1zM860 341h1v1h-1zM160 342h1v1h-1zM434 342h1v1h-1zM585 342h1v1h-1zM860 342h1v1h-1zM160 343h1v1h-1zM434 343h1v1h-1zM585 343h1v1h-1zM860 343h1v1h-1zM160 344h1v1h-1zM434 344h1v1h-1zM585 344h1v1h-1zM860 344h1v1h-1zM159 345h1v1h-1zM434 345h1v1h-1zM585 345h1v1h-1zM860 345h1v1h-1zM159 346h1v1h-1zM434 346h1v1h-1zM585 346h1v1h-1zM860 346h1v1h-1zM159 347h1v1h-1zM434 347h1v1h-1zM585 347h1v1h-1zM860 347h1v1h-1zM159 348h1v1h-1zM434 348h1v1h-1zM585 348h1v1h-1zM860 348h1v1h-1zM159 349h1v1h-1zM434 349h1v1h-1zM585 349h1v1h-1zM860 349h1v1h-1zM159 350h1v1h-1zM434 350h1v1h-1zM585 350h1v1h-1zM860 350h1v1h-1zM159 351h1v1h-1zM434 351h1v1h-1zM585 351h1v1h-1zM860 351h1v1h-1zM159 352h1v1h-1zM434 352h1v1h-1zM585 352h1v1h-1zM860 352h1v1h-1zM159 353h1v1h-1zM434 353h1v1h-1zM585 353h1v1h-1zM860 353h1v1h-1zM159 354h1v1h-1zM434 354h1v1h-1zM585 354h1v1h-1zM860 354h1v1h-1zM159 355h1v1h-1zM434 355h1v1h-1zM585 355h1v1h-1zM860 355h1v1h-1zM159 356h1v1h-1zM434 356h1v1h-1zM585 356h1v1h-1zM860 356h1v1h-1zM159 357h1v1h-1zM434 357h1v1h-1zM585 357h1v1h-1zM860 357h1v1h-1zM159 358h1v1h-1zM434 358h1v1h-1zM585 358h1v1h-1zM860 358h1v1h-1zM159 359h1v1h-1zM434 359h1v1h-1zM585 359h1v1h-1zM860 359h1v1h-1zM159 360h1v1h-1zM434 360h1v1h-1zM585 360h1v1h-1zM860 360h1v1h-1zM159 361h1v1h-1zM434 361h1v1h-1zM585 361h1v1h-1zM860 361h1v1h-1zM159 362h1v1h-1zM434 362h1v1h-1zM585 362h1v1h-1zM860 362h1v1h-1zM159 363h1v1h-1zM434 363h1v1h-1zM585 363h1v1h-1zM859 363h1v1h-1zM159 364h1v1h-1zM434 364h1v1h-1zM585 364h1v1h-1zM859 364h1v1h-1zM159 365h1v1h-1zM434 365h1v1h-1zM585 365h1v1h-1zM859 365h1v1h-1zM159 366h1v1h-1zM434 366h1v1h-1zM585 366h1v1h-1zM859 366h1v1h-1zM159 367h1v1h-1zM434 367h1v1h-1zM585 367h1v1h-1zM859 367h1v1h-1zM159 368h1v1h-1zM434 368h1v1h-1zM584 368h1v1h-1zM859 368h1v1h-1zM159 369h1v1h-1zM434 369h1v1h-1zM584 369h1v1h-1zM859 369h1v1h-1zM159 370h1v1h-1zM434 370h1v1h-1zM584 370h1v1h-1zM859 370h1v1h-1zM159 371h1v1h-1zM434 371h1v1h-1zM584 371h1v1h-1zM859 371h1v1h-1zM159 372h1v1h-1zM434 372h1v1h-1zM584 372h1v1h-1zM859 372h1v1h-1zM159 373h1v1h-1zM434 373h1v1h-1zM584 373h1v1h-1zM859 373h1v1h-1zM159 374h1v1h-1zM434 374h1v1h-1zM584 374h1v1h-1zM859 374h1v1h-1zM159 375h1v1h-1zM434 375h1v1h-1zM584 375h1v1h-1zM859 375h1v1h-1zM159 376h1v1h-1zM433 376h1v1h-1zM584 376h1v1h-1zM859 376h1v1h-1zM159 377h1v1h-1zM433 377h1v1h-1zM584 377h1v1h-1zM859 377h1v1h-1zM159 378h1v1h-1zM433 378h1v1h-1zM584 378h1v1h-1zM859 378h1v1h-1zM159 379h1v1h-1zM433 379h1v1h-1zM584 379h1v1h-1zM859 379h1v1h-1zM159 380h1v1h-1zM433 380h1v1h-1zM584 380h1v1h-1zM859 380h1v1h-1zM158 381h1v1h-1zM433 381h1v1h-1zM584 381h1v1h-1zM859 381h1v1h-1zM158 382h1v1h-1zM433 382h1v1h-1zM584 382h1v1h-1zM859 382h1v1h-1zM158 383h1v1h-1zM433 383h1v1h-1zM584 383h1v1h-1zM859 383h1v1h-1zM158 384h1v1h-1zM433 384h1v1h-1zM584 384h1v1h-1zM859 384h1v1h-1zM158 385h1v1h-1zM433 385h1v1h-1zM584 385h1v1h-1zM859 385h1v1h-1zM158 386h1v1h-1zM433 386h1v1h-1zM584 386h1v1h-1zM859 386h1v1h-1zM158 387h1v1h-1zM433 387h1v1h-1zM584 387h1v1h-1zM859 387h1v1h-1zM158 388h1v1h-1zM433 388h1v1h-1zM584 388h1v1h-1zM859 388h1v1h-1zM158 389h1v1h-1zM433 389h1v1h-1zM584 389h1v1h-1zM859 389h1v1h-1zM158 390h1v1h-1zM433 390h1v1h-1zM584 390h1v1h-1zM859 390h1v1h-1zM158 391h1v1h-1zM433 391h1v1h-1zM584 391h1v1h-1zM859 391h1v1h-1zM158 392h1v1h-1zM433 392h1v1h-1zM584 392h1v1h-1zM859 392h1v1h-1zM158 393h1v1h-1zM433 393h1v1h-1zM584 393h1v1h-1zM859 393h1v1h-1zM158 394h1v1h-1zM433 394h1v1h-1zM584 394h1v1h-1zM859 394h1v1h-1zM158 395h1v1h-1zM433 395h1v1h-1zM584 395h1v1h-1zM859 395h1v1h-1zM158 396h1v1h-1zM433 396h1v1h-1zM584 396h1v1h-1zM859 396h1v1h-1zM158 397h1v1h-1zM433 397h1v1h-1zM584 397h1v1h-1zM859 397h1v1h-1zM158 398h1v1h-1zM433 398h1v1h-1zM584 398h1v1h-1zM859 398h1v1h-1zM158 399h1v1h-1zM433 399h1v1h-1zM584 399h1v1h-1zM858 399h1v1h-1zM158 400h1v1h-1zM433 400h1v1h-1zM584 400h1v1h-1zM858 400h1v1h-1zM158 401h1v1h-1zM433 401h1v1h-1zM584 401h1v1h-1zM858 401h1v1h-1zM158 402h1v1h-1zM433 402h1v1h-1zM584 402h1v1h-1zM858 402h1v1h-1zM158 403h1v1h-1zM433 403h1v1h-1zM584 403h1v1h-1zM858 403h1v1h-1zM158 404h1v1h-1zM433 404h1v1h-1zM583 404h1v1h-1zM858 404h1v1h-1zM158 405h1v1h-1zM433 405h1v1h-1zM583 405h1v1h-1zM858 405h1v1h-1zM158 406h1v1h-1zM433 406h1v1h-1zM583 406h1v1h-1zM858 406h1v1h-1zM158 407h1v1h-1zM433 407h1v1h-1zM583 407h1v1h-1zM858 407h1v1h-1zM158 408h1v1h-1zM433 408h1v1h-1zM583 408h1v1h-1zM858 408h1v1h-1zM158 409h1v1h-1zM433 409h1v1h-1zM583 409h1v1h-1zM858 409h1v1h-1zM158 410h1v1h-1zM433 410h1v1h-1zM583 410h1v1h-1zM858 410h1v1h-1zM158 411h1v1h-1zM433 411h1v1h-1zM583 411h1v1h-1zM858 411h1v1h-1zM158 412h1v1h-1zM432 412h1v1h-1zM583 412h1v1h-1zM858 412h1v1h-1zM158 413h1v1h-1zM432 413h1v1h-1zM583 413h1v1h-1zM858 413h1v1h-1zM158 414h1v1h-1zM432 414h1v1h-1zM583 414h1v1h-1zM858 414h1v1h-1zM158 415h1v1h-1zM432 415h1v1h-1zM583 415h1v1h-1zM858 415h1v1h-1zM158 416h1v1h-1zM432 416h1v1h-1zM583 416h1v1h-1zM858 416h1v1h-1zM157 417h1v1h-1zM432 417h1v1h-1zM583 417h1v1h-1zM858 417h1v1h-1zM157 418h1v1h-1zM432 418h1v1h-1zM583 418h1v1h-1zM858 418h1v1h-1zM157 419h1v1h-1zM432 419h1v1h-1zM583 419h1v1h-1zM858 419h1v1h-1zM157 420h1v1h-1zM432 420h1v1h-1zM583 420h1v1h-1zM858 420h1v1h-1zM157 421h1v1h-1zM432 421h1v1h-1zM583 421h1v1h-1zM858 421h1v1h-1zM157 422h1v1h-1zM432 422h1v1h-1zM583 422h1v1h-1zM858 422h1v1h-1zM157 423h1v1h-1zM432 423h1v1h-1zM583 423h1v1h-1zM858 423h1v1h-1zM157 424h1v1h-1zM432 424h1v1h-1zM583 424h1v1h-1zM858 424h1v1h-1zM157 425h1v1h-1zM432 425h1v1h-1zM583 425h1v1h-1zM858 425h1v1h-1zM157 426h1v1h-1zM432 426h1v1h-1zM583 426h1v1h-1zM858 426h1v1h-1zM157 427h1v1h-1zM432 427h1v1h-1zM583 427h1v1h-1zM858 427h1v1h-1zM157 428h1v1h-1zM432 428h1v1h-1zM583 428h1v1h-1zM858 428h1v1h-1zM157 429h1v1h-1zM432 429h1v1h-1zM583 429h1v1h-1zM858 429h1v1h-1zM157 430h1v1h-1zM432 430h1v1h-1zM583 430h1v1h-1zM858 430h1v1h-1zM157 431h1v1h-1zM432 431h1v1h-1zM583 431h1v1h-1zM858 431h1v1h-1zM157 432h1v1h-1zM432 432h1v1h-1zM583 432h1v1h-1zM858 432h1v1h-1zM157 433h1v1h-1zM432 433h1v1h-1zM583 433h1v1h-1zM858 433h1v1h-1zM157 434h1v1h-1zM432 434h1v1h-1zM583 434h1v1h-1zM858 434h1v1h-1zM157 435h1v1h-1zM432 435h1v1h-1zM583 435h1v1h-1zM857 435h1v1h-1zM157 436h1v1h-1zM432 436h1v1h-1zM583 436h1v1h-1zM857 436h1v1h-1zM157 437h1v1h-1zM432 437h1v1h-1zM583 437h1v1h-1zM857 437h1v1h-1zM157 438h1v1h-1zM432 438h1v1h-1zM583 438h1v1h-1zM857 438h1v1h-1zM157 439h1v1h-1zM432 439h1v1h-1zM583 439h1v1h-1zM857 439h1v1h-1zM157 440h1v1h-1zM432 440h1v1h-1zM582 440h1v1h-1zM857 440h1v1h-1zM157 441h1v1h-1zM432 441h1v1h-1zM582 441h1v1h-1zM857 441h1v1h-1zM157 442h1v1h-1zM432 442h1v1h-1zM582 442h1v1h-1zM857 442h1v1h-1zM157 443h1v1h-1zM432 443h1v1h-1zM582 443h1v1h-1zM857 443h1v1h-1zM157 444h1v1h-1zM432 444h1v1h-1zM582 444h1v1h-1zM857 444h1v1h-1zM157 445h1v1h-1zM432 445h1v1h-1zM582 445h1v1h-1zM857 445h1v1h-1zM157 446h1v1h-1zM432 446h1v1h-1zM582 446h1v1h-1zM857 446h1v1h-1zM157 447h1v1h-1zM432 447h1v1h-1zM582 447h1v1h-1zM857 447h1v1h-1zM157 448h1v1h-1zM431 448h1v1h-1zM582 448h1v1h-1zM857 448h1v1h-1zM157 449h1v1h-1zM431 449h1v1h-1zM582 449h1v1h-1zM857 449h1v1h-1zM157 450h1v1h-1zM431 450h1v1h-1zM582 450h1v1h-1zM857 450h1v1h-1zM157 451h1v1h-1zM431 451h1v1h-1zM582 451h1v1h-1zM857 451h1v1h-1zM157 452h1v1h-1zM431 452h1v1h-1zM582 452h1v1h-1zM857 452h1v1h-1zM156 453h1v1h-1zM431 453h1v1h-1zM582 453h1v1h-1zM857 453h1v1h-1zM156 454h1v1h-1zM431 454h1v1h-1zM582 454h1v1h-1zM857 454h1v1h-1zM156 455h1v1h-1zM431 455h1v1h-1zM582 455h1v1h-1zM857 455h1v1h-1zM156 456h1v1h-1zM431 456h1v1h-1zM582 456h1v1h-1zM857 456h1v1h-1zM156 457h1v1h-1zM431 457h1v1h-1zM582 457h1v1h-1zM857 457h1v1h-1zM156 458h1v1h-1zM431 458h1v1h-1zM582 458h1v1h-1zM857 458h1v1h-1zM156 459h1v1h-1zM431 459h1v1h-1zM582 459h1v1h-1zM857 459h1v1h-1zM156 460h1v1h-1zM431 460h1v1h-1zM582 460h1v1h-1zM857 460h1v1h-1zM156 461h1v1h-1zM431 461h1v1h-1zM582 461h1v1h-1zM857 461h1v1h-1zM156 462h1v1h-1zM431 462h1v1h-1zM582 462h1v1h-1zM857 462h1v1h-1zM156 463h1v1h-1zM431 463h1v1h-1zM582 463h1v1h-1zM857 463h1v1h-1zM156 464h1v1h-1zM431 464h1v1h-1zM582 464h1v1h-1zM857 464h1v1h-1zM156 465h1v1h-1zM431 465h1v1h-1zM582 465h1v1h-1zM857 465h1v1h-1zM156 466h1v1h-1zM431 466h1v1h-1zM582 466h1v1h-1zM857 466h1v1h-1zM156 467h1v1h-1zM431 467h1v1h-1zM582 467h1v1h-1zM857 467h1v1h-1zM156 468h1v1h-1zM431 468h1v1h-1zM582 468h1v1h-1zM857 468h1v1h-1zM156 469h1v1h-1zM431 469h1v1h-1zM582 469h1v1h-1zM857 469h1v1h-1zM156 470h1v1h-1zM431 470h1v1h-1zM582 470h1v1h-1zM857 470h1v1h-1zM156 471h1v1h-1zM431 471h1v1h-1zM582 471h1v1h-1zM856 471h1v1h-1zM156 472h1v1h-1zM431 472h1v1h-1zM582 472h1v1h-1zM856 472h1v1h-1zM156 473h1v1h-1zM431 473h1v1h-1zM582 473h1v1h-1zM856 473h1v1h-1zM156 474h1v1h-1zM431 474h1v1h-1zM582 474h1v1h-1zM856 474h1v1h-1zM156 475h1v1h-1zM431 475h1v1h-1zM582 475h1v1h-1zM856 475h1v1h-1zM156 476h1v1h-1zM431 476h1v1h-1zM581 476h1v1h-1zM856 476h1v1h-1zM156 477h1v1h-1zM431 477h1v1h-1zM581 477h1v1h-1zM856 477h1v1h-1zM156 478h1v1h-1zM431 478h1v1h-1zM581 478h1v1h-1zM856 478h1v1h-1zM156 479h1v1h-1zM431 479h1v1h-1zM581 479h1v1h-1zM856 479h1v1h-1zM156 480h1v1h-1zM431 480h1v1h-1zM581 480h1v1h-1zM856 480h1v1h-1zM156 481h1v1h-1zM431 481h1v1h-1zM581 481h1v1h-1zM856 481h1v1h-1zM156 482h1v1h-1zM431 482h1v1h-1zM581 482h1v1h-1zM856 482h1v1h-1zM156 483h1v1h-1zM431 483h1v1h-1zM581 483h1v1h-1zM856 483h1v1h-1zM156 484h1v1h-1zM430 484h1v1h-1zM581 484h1v1h-1zM856 484h1v1h-1zM156 485h1v1h-1zM430 485h1v1h-1zM581 485h1v1h-1zM856 485h1v1h-1zM156 486h1v1h-1zM430 486h1v1h-1zM581 486h1v1h-1zM856 486h1v1h-1zM156 487h1v1h-1zM430 487h1v1h-1zM581 487h1v1h-1zM856 487h1v1h-1zM156 488h1v1h-1zM430 488h1v1h-1zM581 488h1v1h-1zM856 488h1v1h-1zM155 489h1v1h-1zM430 489h1v1h-1zM581 489h1v1h-1zM856 489h1v1h-1zM155 490h1v1h-1zM430 490h1v1h-1zM581 490h1v1h-1zM856 490h1v1h-1zM155 491h1v1h-1zM430 491h1v1h-1zM581 491h1v1h-1zM856 491h1v1h-1zM155 492h1v1h-1zM430 492h1v1h-1zM581 492h1v1h-1zM856 492h1v1h-1zM155 493h1v1h-1zM430 493h1v1h-1zM581 493h1v1h-1zM856 493h1v1h-1zM155 494h1v1h-1zM430 494h1v1h-1zM581 494h1v1h-1zM856 494h1v1h-1zM155 495h1v1h-1zM430 495h1v1h-1zM581 495h1v1h-1zM856 495h1v1h-1zM155 496h1v1h-1zM430 496h1v1h-1zM581 496h1v1h-1zM856 496h1v1h-1zM155 497h1v1h-1zM430 497h1v1h-1zM581 497h1v1h-1zM856 497h1v1h-1zM155 498h1v1h-1zM430 498h1v1h-1zM581 498h1v1h-1zM856 498h1v1h-1zM155 499h1v1h-1zM430 499h1v1h-1zM581 499h1v1h-1zM856 499h1v1h-1zM155 500h1v1h-1zM430 500h1v1h-1zM581 500h1v1h-1zM856 500h1v1h-1zM155 501h1v1h-1zM430 501h1v1h-1zM581 501h1v1h-1zM856 501h1v1h-1zM155 502h1v1h-1zM430 502h1v1h-1zM581 502h1v1h-1zM856 502h1v1h-1zM155 503h1v1h-1zM430 503h1v1h-1zM581 503h1v1h-1zM856 503h1v1h-1zM155 504h1v1h-1zM430 504h1v1h-1zM581 504h1v1h-1zM856 504h1v1h-1zM155 505h1v1h-1zM430 505h1v1h-1zM581 505h1v1h-1zM856 505h1v1h-1zM155 506h1v1h-1zM430 506h1v1h-1zM581 506h1v1h-1zM856 506h1v1h-1zM155 507h1v1h-1zM430 507h1v1h-1zM581 507h1v1h-1zM855 507h1v1h-1zM155 508h1v1h-1zM430 508h1v1h-1zM581 508h1v1h-1zM855 508h1v1h-1zM155 509h1v1h-1zM430 509h1v1h-1zM581 509h1v1h-1zM855 509h1v1h-1zM155 510h1v1h-1zM430 510h1v1h-1zM581 510h1v1h-1zM855 510h1v1h-1zM155 511h1v1h-1zM430 511h1v1h-1zM581 511h1v1h-1zM855 511h1v1h-1zM155 512h1v1h-1zM430 512h1v1h-1zM580 512h1v1h-1zM855 512h1v1h-1zM155 513h1v1h-1zM430 513h1v1h-1zM580 513h1v1h-1zM855 513h1v1h-1zM155 514h1v1h-1zM430 514h1v1h-1zM580 514h1v1h-1zM855 514h1v1h-1zM155 515h1v1h-1zM430 515h1v1h-1zM580 515h1v1h-1zM855 515h1v1h-1zM155 516h1v1h-1zM430 516h1v1h-1zM580 516h1v1h-1zM855 516h1v1h-1zM155 517h1v1h-1zM430 517h1v1h-1zM580 517h1v1h-1zM855 517h1v1h-1zM155 518h1v1h-1zM430 518h1v1h-1zM580 518h1v1h-1zM855 518h1v1h-1zM155 519h1v1h-1zM430 519h1v1h-1zM580 519h1v1h-1zM855 519h1v1h-1zM155 520h1v1h-1zM429 520h1v1h-1zM580 520h1v1h-1zM855 520h1v1h-1zM155 521h1v1h-1zM429 521h1v1h-1zM580 521h1v1h-1zM855 521h1v1h-1zM155 522h1v1h-1zM429 522h1v1h-1zM580 522h1v1h-1zM855 522h1v1h-1zM155 523h1v1h-1zM429 523h1v1h-1zM580 523h1v1h-1zM855 523h1v1h-1zM155 524h1v1h-1zM429 524h1v1h-1zM580 524h1v1h-1zM855 524h1v1h-1zM154 525h1v1h-1zM429 525h1v1h-1zM580 525h1v1h-1zM855 525h1v1h-1zM154 526h1v1h-1zM429 526h1v1h-1zM580 526h1v1h-1zM855 526h1v1h-1zM154 527h1v1h-1zM429 527h1v1h-1zM580 527h1v1h-1zM855 527h1v1h-1zM154 528h1v1h-1zM429 528h1v1h-1zM580 528h1v1h-1zM855 528h1v1h-1zM154 529h1v1h-1zM429 529h1v1h-1zM580 529h1v1h-1zM855 529h1v1h-1zM154 530h1v1h-1zM429 530h1v1h-1zM580 530h1v1h-1zM855 530h1v1h-1zM154 531h1v1h-1zM429 531h1v1h-1zM580 531h1v1h-1zM855 531h1v1h-1zM154 532h1v1h-1zM429 532h1v1h-1zM580 532h1v1h-1zM855 532h1v1h-1zM154 533h1v1h-1zM429 533h1v1h-1zM580 533h1v1h-1zM855 533h1v1h-1zM154 534h1v1h-1zM429 534h1v1h-1zM580 534h1v1h-1zM855 534h1v1h-1zM154 535h1v1h-1zM429 535h1v1h-1zM580 535h1v1h-1zM855 535h1v1h-1zM154 536h1v1h-1zM429 536h1v1h-1zM580 536h1v1h-1zM855 536h1v1h-1zM154 537h1v1h-1zM429 537h1v1h-1zM580 537h1v1h-1zM855 537h1v1h-1zM154 538h1v1h-1zM429 538h1v1h-1zM580 538h1v1h-1zM855 538h1v1h-1zM154 539h1v1h-1zM429 539h1v1h-1zM580 539h1v1h-1zM855 539h1v1h-1zM154 540h1v1h-1zM429 540h1v1h-1zM580 540h1v1h-1zM855 540h1v1h-1zM154 541h1v1h-1zM429 541h1v1h-1zM580 541h1v1h-1zM855 541h1v1h-1zM154 542h1v1h-1zM429 542h1v1h-1zM580 542h1v1h-1zM855 542h1v1h-1zM154 543h1v1h-1zM429 543h1v1h-1zM580 543h1v1h-1zM854 543h1v1h-1zM154 544h1v1h-1zM429 544h1v1h-1zM580 544h1v1h-1zM854 544h1v1h-1zM154 545h1v1h-1zM429 545h1v1h-1zM580 545h1v1h-1zM854 545h1v1h-1zM154 546h1v1h-1zM429 546h1v1h-1zM580 546h1v1h-1zM854 546h1v1h-1zM154 547h1v1h-1zM429 547h1v1h-1zM580 547h1v1h-1zM854 547h1v1h-1zM154 548h1v1h-1zM429 548h1v1h-1zM579 548h1v1h-1zM854 548h1v1h-1zM154 549h1v1h-1zM429 549h1v1h-1zM579 549h1v1h-1zM854 549h1v1h-1zM154 550h1v1h-1zM429 550h1v1h-1zM579 550h1v1h-1zM854 550h1v1h-1zM154 551h1v1h-1zM429 551h1v1h-1zM579 551h1v1h-1zM854 551h1v1h-1zM154 552h1v1h-1zM429 552h1v1h-1zM579 552h1v1h-1zM854 552h1v1h-1zM154 553h1v1h-1zM429 553h1v1h-1zM579 553h1v1h-1zM854 553h1v1h-1zM154 554h1v1h-1zM429 554h1v1h-1zM579 554h1v1h-1zM854 554h1v1h-1zM154 555h1v1h-1zM429 555h1v1h-1zM579 555h1v1h-1zM854 555h1v1h-1zM154 556h1v1h-1zM426 556h8v1h-8zM579 556h1v1h-1zM854 556h1v1h-1zM154 557h1v1h-1zM423 557h3v1h-3zM434 557h7v1h-7zM579 557h1v1h-1zM854 557h1v1h-1zM154 558h1v1h-1zM419 558h4v1h-4zM441 558h7v1h-7zM579 558h1v1h-1zM854 558h1v1h-1zM154 559h1v1h-1zM415 559h4v1h-4zM448 559h7v1h-7zM579 559h1v1h-1zM854 559h1v1h-1zM154 560h1v1h-1zM411 560h4v1h-4zM455 560h6v1h-6zM579 560h1v1h-1zM854 560h1v1h-1zM153 561h1v1h-1zM407 561h4v1h-4zM461 561h7v1h-7zM579 561h1v1h-1zM854 561h1v1h-1zM153 562h1v1h-1zM403 562h4v1h-4zM468 562h7v1h-7zM579 562h1v1h-1zM854 562h1v1h-1zM153 563h1v1h-1zM399 563h4v1h-4zM475 563h7v1h-7zM579 563h1v1h-1zM854 563h1v1h-1zM153 564h1v1h-1zM395 564h4v1h-4zM482 564h7v1h-7zM579 564h1v1h-1zM854 564h1v1h-1zM153 565h1v1h-1zM391 565h4v1h-4zM489 565h6v1h-6zM579 565h1v1h-1zM854 565h1v1h-1zM153 566h1v1h-1zM387 566h4v1h-4zM495 566h7v1h-7zM579 566h1v1h-1zM854 566h1v1h-1zM153 567h1v1h-1zM383 567h4v1h-4zM502 567h7v1h-7zM579 567h1v1h-1zM854 567h1v1h-1zM153 568h1v1h-1zM379 568h4v1h-4zM509 568h7v1h-7zM579 568h1v1h-1zM854 568h1v1h-1zM153 569h1v1h-1zM375 569h4v1h-4zM516 569h6v1h-6zM579 569h1v1h-1zM854 569h1v1h-1zM153 570h1v1h-1zM372 570h3v1h-3zM522 570h7v1h-7zM579 570h1v1h-1zM854 570h1v1h-1zM153 571h1v1h-1zM368 571h4v1h-4zM529 571h7v1h-7zM579 571h1v1h-1zM854 571h1v1h-1zM153 572h1v1h-1zM364 572h4v1h-4zM536 572h7v1h-7zM579 572h1v1h-1zM854 572h1v1h-1zM153 573h1v1h-1zM360 573h4v1h-4zM543 573h7v1h-7zM579 573h1v1h-1zM854 573h1v1h-1zM153 574h1v1h-1zM356 574h4v1h-4zM550 574h6v1h-6zM579 574h1v1h-1zM854 574h1v1h-1zM153 575h1v1h-1zM352 575h4v1h-4zM556 575h7v1h-7zM579 575h1v1h-1zM854 575h1v1h-1zM153 576h1v1h-1zM348 576h4v1h-4zM563 576h7v1h-7zM579 576h1v1h-1zM854 576h1v1h-1zM153 577h1v1h-1zM344 577h4v1h-4zM570 577h7v1h-7zM579 577h1v1h-1zM854 577h1v1h-1zM153 578h1v1h-1zM340 578h4v1h-4zM577 578h7v1h-7zM854 578h1v1h-1zM153 579h1v1h-1zM336 579h4v1h-4zM579 579h1v1h-1zM584 579h6v1h-6zM853 579h1v1h-1zM153 580h1v1h-1zM332 580h4v1h-4zM579 580h1v1h-1zM590 580h7v1h-7zM853 580h1v1h-1zM153 581h1v1h-1zM328 581h4v1h-4zM579 581h1v1h-1zM597 581h7v1h-7zM853 581h1v1h-1zM153 582h1v1h-1zM325 582h3v1h-3zM579 582h1v1h-1zM604 582h7v1h-7zM853 582h1v1h-1zM153 583h1v1h-1zM321 583h4v1h-4zM579 583h1v1h-1zM611 583h7v1h-7zM853 583h1v1h-1zM153 584h1v1h-1zM317 584h4v1h-4zM578 584h1v1h-1zM618 584h6v1h-6zM853 584h1v1h-1zM153 585h1v1h-1zM313 585h4v1h-4zM578 585h1v1h-1zM624 585h7v1h-7zM853 585h1v1h-1zM153 586h1v1h-1zM309 586h4v1h-4zM578 586h1v1h-1zM631 586h7v1h-7zM853 586h1v1h-1zM153 587h1v1h-1zM305 587h4v1h-4zM578 587h1v1h-1zM638 587h7v1h-7zM853 587h1v1h-1zM153 588h1v1h-1zM301 588h4v1h-4zM578 588h1v1h-1zM645 588h6v1h-6zM853 588h1v1h-1zM153 589h1v1h-1zM297 589h4v1h-4zM578 589h1v1h-1zM651 589h7v1h-7zM853 589h1v1h-1zM153 590h1v1h-1zM293 590h4v1h-4zM578 590h1v1h-1zM658 590h7v1h-7zM853 590h1v1h-1zM153 591h1v1h-1zM289 591h4v1h-4zM578 591h1v1h-1zM665 591h7v1h-7zM853 591h1v1h-1zM153 592h1v1h-1zM285 592h4v1h-4zM578 592h1v1h-1zM672 592h7v1h-7zM853 592h1v1h-1zM153 593h1v1h-1zM281 593h4v1h-4zM578 593h1v1h-1zM679 593h6v1h-6zM853 593h1v1h-1zM153 594h1v1h-1zM278 594h3v1h-3zM578 594h1v1h-1zM685 594h7v1h-7zM853 594h1v1h-1zM153 595h1v1h-1zM274 595h4v1h-4zM578 595h1v1h-1zM692 595h7v1h-7zM853 595h1v1h-1zM153 596h1v1h-1zM270 596h4v1h-4zM578 596h1v1h-1zM699 596h7v1h-7zM853 596h1v1h-1zM152 597h1v1h-1zM266 597h4v1h-4zM578 597h1v1h-1zM706 597h7v1h-7zM853 597h1v1h-1zM152 598h1v1h-1zM262 598h4v1h-4zM578 598h1v1h-1zM713 598h6v1h-6zM853 598h1v1h-1zM152 599h1v1h-1zM258 599h4v1h-4zM578 599h1v1h-1zM719 599h7v1h-7zM853 599h1v1h-1zM152 600h1v1h-1zM254 600h4v1h-4zM578 600h1v1h-1zM726 600h7v1h-7zM853 600h1v1h-1zM152 601h1v1h-1zM250 601h4v1h-4zM578 601h1v1h-1zM733 601h7v1h-7zM853 601h1v1h-1zM152 602h1v1h-1zM246 602h4v1h-4zM578 602h1v1h-1zM740 602h6v1h-6zM853 602h1v1h-1zM152 603h1v1h-1zM242 603h4v1h-4zM578 603h1v1h-1zM746 603h7v1h-7zM853 603h1v1h-1zM152 604h1v1h-1zM238 604h4v1h-4zM578 604h1v1h-1zM753 604h7v1h-7zM853 604h1v1h-1zM152 605h1v1h-1zM234 605h4v1h-4zM578 605h1v1h-1zM760 605h7v1h-7zM853 605h1v1h-1zM152 606h1v1h-1zM231 606h3v1h-3zM578 606h1v1h-1zM767 606h7v1h-7zM853 606h1v1h-1zM152 607h1v1h-1zM227 607h4v1h-4zM578 607h1v1h-1zM774 607h6v1h-6zM853 607h1v1h-1zM152 608h1v1h-1zM223 608h4v1h-4zM578 608h1v1h-1zM780 608h7v1h-7zM853 608h1v1h-1zM152 609h1v1h-1zM219 609h4v1h-4zM578 609h1v1h-1zM787 609h7v1h-7zM853 609h1v1h-1zM152 610h1v1h-1zM215 610h4v1h-4zM578 610h1v1h-1zM794 610h7v1h-7zM853 610h1v1h-1zM152 611h1v1h-1zM211 611h4v1h-4zM578 611h1v1h-1zM801 611h7v1h-7zM853 611h1v1h-1zM152 612h1v1h-1zM207 612h4v1h-4zM578 612h1v1h-1zM808 612h6v1h-6zM853 612h1v1h-1zM152 613h1v1h-1zM203 613h4v1h-4zM578 613h1v1h-1zM814 613h7v1h-7zM853 613h1v1h-1zM152 614h1v1h-1zM199 614h4v1h-4zM578 614h1v1h-1zM821 614h7v1h-7zM853 614h1v1h-1zM152 615h1v1h-1zM195 615h4v1h-4zM578 615h1v1h-1zM828 615h7v1h-7zM852 615h1v1h-1zM152 616h1v1h-1zM191 616h4v1h-4zM578 616h1v1h-1zM835 616h6v1h-6zM852 616h1v1h-1zM152 617h1v1h-1zM187 617h4v1h-4zM578 617h1v1h-1zM841 617h7v1h-7zM852 617h1v1h-1zM152 618h1v1h-1zM183 618h4v1h-4zM578 618h1v1h-1zM848 618h6v1h-6zM152 619h1v1h-1zM180 619h3v1h-3zM578 619h1v1h-1zM848 619h4v1h-4zM152 620h1v1h-1zM176 620h4v1h-4zM577 620h1v1h-1zM844 620h4v1h-4zM152 621h1v1h-1zM172 621h4v1h-4zM577 621h1v1h-1zM840 621h4v1h-4zM152 622h1v1h-1zM168 622h4v1h-4zM577 622h1v1h-1zM836 622h4v1h-4zM152 623h1v1h-1zM164 623h4v1h-4zM577 623h1v1h-1zM832 623h4v1h-4zM152 624h1v1h-1zM160 624h4v1h-4zM577 624h1v1h-1zM828 624h4v1h-4zM152 625h1v1h-1zM156 625h4v1h-4zM577 625h1v1h-1zM824 625h4v1h-4zM152 626h4v1h-4zM577 626h1v1h-1zM820 626h4v1h-4zM152 627h7v1h-7zM577 627h1v1h-1zM817 627h3v1h-3zM159 628h7v1h-7zM577 628h1v1h-1zM813 628h4v1h-4zM166 629h7v1h-7zM577 629h1v1h-1zM809 629h4v1h-4zM173 630h6v1h-6zM577 630h1v1h-1zM805 630h4v1h-4zM179 631h7v1h-7zM577 631h1v1h-1zM801 631h4v1h-4zM186 632h7v1h-7zM577 632h1v1h-1zM797 632h4v1h-4zM193 633h7v1h-7zM577 633h1v1h-1zM793 633h4v1h-4zM200 634h7v1h-7zM577 634h1v1h-1zM789 634h4v1h-4zM207 635h6v1h-6zM577 635h1v1h-1zM785 635h4v1h-4zM213 636h7v1h-7zM577 636h1v1h-1zM781 636h4v1h-4zM220 637h7v1h-7zM577 637h1v1h-1zM777 637h4v1h-4zM227 638h7v1h-7zM577 638h1v1h-1zM773 638h4v1h-4zM234 639h6v1h-6zM577 639h1v1h-1zM770 639h3v1h-3zM240 640h7v1h-7zM577 640h1v1h-1zM766 640h4v1h-4zM247 641h7v1h-7zM577 641h1v1h-1zM762 641h4v1h-4zM254 642h7v1h-7zM577 642h1v1h-1zM758 642h4v1h-4zM261 643h7v1h-7zM577 643h1v1h-1zM754 643h4v1h-4zM268 644h6v1h-6zM577 644h1v1h-1zM750 644h4v1h-4zM274 645h7v1h-7zM577 645h1v1h-1zM746 645h4v1h-4zM281 646h7v1h-7zM577 646h1v1h-1zM742 646h4v1h-4zM288 647h7v1h-7zM577 647h1v1h-1zM738 647h4v1h-4zM295 648h7v1h-7zM577 648h1v1h-1zM734 648h4v1h-4zM302 649h6v1h-6zM577 649h1v1h-1zM730 649h4v1h-4zM308 650h7v1h-7zM577 650h1v1h-1zM726 650h4v1h-4zM315 651h7v1h-7zM577 651h1v1h-1zM723 651h3v1h-3zM322 652h7v1h-7zM577 652h1v1h-1zM719 652h4v1h-4zM329 653h6v1h-6zM577 653h1v1h-1zM715 653h4v1h-4zM335 654h7v1h-7zM577 654h1v1h-1zM711 654h4v1h-4zM342 655h7v1h-7zM577 655h1v1h-1zM707 655h4v1h-4zM349 656h7v1h-7zM576 656h1v1h-1zM703 656h4v1h-4zM356 657h7v1h-7zM576 657h1v1h-1zM699 657h4v1h-4zM363 658h6v1h-6zM576 658h1v1h-1zM695 658h4v1h-4zM369 659h7v1h-7zM576 659h1v1h-1zM691 659h4v1h-4zM376 660h7v1h-7zM576 660h1v1h-1zM687 660h4v1h-4zM383 661h7v1h-7zM576 661h1v1h-1zM683 661h4v1h-4zM390 662h7v1h-7zM576 662h1v1h-1zM679 662h4v1h-4zM397 663h6v1h-6zM576 663h1v1h-1zM676 663h3v1h-3zM403 664h7v1h-7zM576 664h1v1h-1zM672 664h4v1h-4zM410 665h7v1h-7zM576 665h1v1h-1zM668 665h4v1h-4zM417 666h7v1h-7zM576 666h1v1h-1zM664 666h4v1h-4zM424 667h7v1h-7zM576 667h1v1h-1zM660 667h4v1h-4zM431 668h6v1h-6zM576 668h1v1h-1zM656 668h4v1h-4zM437 669h7v1h-7zM576 669h1v1h-1zM652 669h4v1h-4zM444 670h7v1h-7zM576 670h1v1h-1zM648 670h4v1h-4zM451 671h7v1h-7zM576 671h1v1h-1zM644 671h4v1h-4zM458 672h6v1h-6zM576 672h1v1h-1zM640 672h4v1h-4zM464 673h7v1h-7zM576 673h1v1h-1zM636 673h4v1h-4zM471 674h7v1h-7zM576 674h1v1h-1zM632 674h4v1h-4zM478 675h7v1h-7zM576 675h1v1h-1zM628 675h4v1h-4zM485 676h7v1h-7zM576 676h1v1h-1zM625 676h3v1h-3zM492 677h6v1h-6zM576 677h1v1h-1zM621 677h4v1h-4zM498 678h7v1h-7zM576 678h1v1h-1zM617 678h4v1h-4zM505 679h7v1h-7zM576 679h1v1h-1zM613 679h4v1h-4zM512 680h7v1h-7zM576 680h1v1h-1zM609 680h4v1h-4zM519 681h7v1h-7zM576 681h1v1h-1zM605 681h4v1h-4zM526 682h6v1h-6zM576 682h1v1h-1zM601 682h4v1h-4zM532 683h7v1h-7zM576 683h1v1h-1zM597 683h4v1h-4zM539 684h7v1h-7zM576 684h1v1h-1zM593 684h4v1h-4zM546 685h7v1h-7zM576 685h1v1h-1zM589 685h4v1h-4zM553 686h6v1h-6zM576 686h1v1h-1zM585 686h4v1h-4zM559 687h7v1h-7zM576 687h1v1h-1zM581 687h4v1h-4zM566 688h7v1h-7zM576 688h1v1h-1zM578 688h3v1h-3zM573 689h5v1h-5z"/><path fill="#ffff00" d="M304 94h1v1h-1zM304 95h1v1h-1zM304 96h1v1h-1zM304 97h1v1h-1zM304 98h1v1h-1zM304 99h1v1h-1zM304 100h1v1h-1zM304 101h1v1h-1zM304 102h1v1h-1zM304 103h1v1h-1zM304 104h1v1h-1zM304 105h1v1h-1zM304 106h1v1h-1zM304 107h1v1h-1zM303 108h4v1h-4zM303 109h1v1h-1zM307 109h6v1h-6zM303 110h1v1h-1zM303 111h1v1h-1zM303 112h1v1h-1zM303 113h1v1h-1zM303 114h1v1h-1zM303 115h1v1h-1zM303 116h1v1h-1zM303 117h1v1h-1zM303 118h1v1h-1zM303 119h1v1h-1zM303 120h1v1h-1zM303 121h1v1h-1zM303 122h1v1h-1zM303 123h1v1h-1zM303 124h1v1h-1zM303 125h1v1h-1zM303 126h1v1h-1zM303 127h1v1h-1zM303 128h1v1h-1zM303 129h1v1h-1zM303 130h1v1h-1zM303 131h1v1h-1zM303 132h1v1h-1zM303 133h1v1h-1zM303 134h3v1h-3zM303 135h1v1h-1zM306 135h6v1h-6zM303 136h1v1h-1zM303 137h1v1h-1zM303 138h1v1h-1zM303 139h1v1h-1zM303 140h1v1h-1zM303 141h1v1h-1zM303 142h1v1h-1zM303 143h1v1h-1zM302 144h1v1h-1zM302 145h1v1h-1zM302 146h1v1h-1zM302 147h1v1h-1zM302 148h1v1h-1zM302 149h1v1h-1zM302 150h1v1h-1zM302 151h1v1h-1zM302 152h1v1h-1zM302 153h1v1h-1zM302 154h1v1h-1zM302 155h1v1h-1zM302 156h1v1h-1zM302 157h1v1h-1zM302 158h1v1h-1zM302 159h1v1h-1zM302 160h3v1h-3zM302 161h1v1h-1zM305 161h7v1h-7zM302 162h1v1h-1zM302 163h1v1h-1zM302 164h1v1h-1zM302 165h1v1h-1zM302 166h1v1h-1zM302 167h1v1h-1zM302 168h1v1h-1zM302 169h1v1h-1zM302 170h1v1h-1zM302 171h1v1h-1zM302 172h1v1h-1zM302 173h1v1h-1zM302 174h1v1h-1zM302 175h1v1h-1zM302 176h1v1h-1zM302 177h1v1h-1zM302 178h1v1h-1zM302 179h1v1h-1zM301 180h1v1h-1zM301 181h1v1h-1zM301 182h1v1h-1zM301 183h1v1h-1zM301 184h1v1h-1zM301 185h1v1h-1zM301 186h3v1h-3zM301 187h1v1h-1zM304 187h7v1h-7zM301 188h1v1h-1zM301 189h1v1h-1zM301 190h1v1h-1zM301 191h1v1h-1zM301 192h1v1h-1zM301 193h1v1h-1zM301 194h1v1h-1zM301 195h1v1h-1zM301 196h1v1h-1zM301 197h1v1h-1zM301 198h1v1h-1zM301 199h1v1h-1zM301 200h1v1h-1zM301 201h1v1h-1zM301 202h1v1h-1zM301 203h1v1h-1zM301 204h1v1h-1zM301 205h1v1h-1zM301 206h1v1h-1zM301 207h1v1h-1zM301 208h1v1h-1zM301 209h1v1h-1zM301 210h1v1h-1zM301 211h1v1h-1zM301 212h2v1h-2zM301 213h1v1h-1zM303 213h7v1h-7zM301 214h1v1h-1zM310 214h7v1h-7zM301 215h1v1h-1zM317 215h6v1h-6zM300 216h1v1h-1zM300 217h1v1h-1zM300 218h1v1h-1zM300 219h1v1h-1zM300 220h1v1h-1zM300 221h1v1h-1zM300 222h1v1h-1zM300 223h1v1h-1zM300 224h1v1h-1zM300 225h1v1h-1zM300 226h1v1h-1zM300 227h1v1h-1zM300 228h1v1h-1zM300 229h1v1h-1zM300 230h1v1h-1zM300 231h1v1h-1zM300 232h1v1h-1zM300 233h1v1h-1zM300 234h1v1h-1zM300 235h1v1h-1zM300 236h1v1h-1zM300 237h1v1h-1zM300 238h2v1h-2zM300 239h1v1h-1zM302 239h8v1h-8zM300 240h1v1h-1zM300 241h1v1h-1zM300 242h1v1h-1zM300 243h1v1h-1zM300 244h1v1h-1zM300 245h1v1h-1zM300 246h1v1h-1zM300 247h1v1h-1zM300 248h1v1h-1zM300 249h1v1h-1zM300 250h1v1h-1zM300 251h1v1h-1zM299 252h1v1h-1zM299 253h1v1h-1zM299 254h1v1h-1zM299 255h1v1h-1zM299 256h1v1h-1zM299 257h1v1h-1zM299 258h1v1h-1zM299 259h1v1h-1zM299 260h1v1h-1zM299 261h1v1h-1zM299 262h1v1h-1zM299 263h1v1h-1zM299 264h2v1h-2zM299 265h1v1h-1zM301 265h7v1h-7zM299 266h1v1h-1zM308 266h1v1h-1zM299 267h1v1h-1zM299 268h1v1h-1zM299 269h1v1h-1zM299 270h1v1h-1zM299 271h1v1h-1zM299 272h1v1h-1zM299 273h1v1h-1zM299 274h1v1h-1zM299 275h1v1h-1zM299 276h1v1h-1zM299 277h1v1h-1zM299 278h1v1h-1zM299 279h1v1h-1zM299 280h1v1h-1zM299 281h1v1h-1zM299 282h1v1h-1zM299 283h1v1h-1zM299 284h1v1h-1zM299 285h1v1h-1zM299 286h1v1h-1zM299 287h1v1h-1zM298 288h1v1h-1zM298 289h1v1h-1zM298 290h2v1h-2zM298 291h1v1h-1zM300 291h7v1h-7zM298 292h1v1h-1zM307 292h1v1h-1zM298 293h1v1h-1zM298 294h1v1h-1zM298 295h1v1h-1zM298 296h1v1h-1zM298 297h1v1h-1zM298 298h1v1h-1zM298 299h1v1h-1zM298 300h1v1h-1zM298 301h1v1h-1zM298 302h1v1h-1zM298 303h1v1h-1zM298 304h1v1h-1zM298 305h1v1h-1zM298 306h1v1h-1zM298 307h1v1h-1zM298 308h1v1h-1zM298 309h1v1h-1zM298 310h1v1h-1zM298 311h1v1h-1zM298 312h1v1h-1zM298 313h1v1h-1zM298 314h1v1h-1zM298 315h1v1h-1zM298 316h2v1h-2zM298 317h1v1h-1zM300 317h6v1h-6zM298 318h1v1h-1zM306 318h1v1h-1zM298 319h1v1h-1zM298 320h1v1h-1zM298 321h1v1h-1zM298 322h1v1h-1zM298 323h1v1h-1zM297 324h1v1h-1zM297 325h1v1h-1zM297 326h1v1h-1zM297 327h1v1h-1zM297 328h1v1h-1zM297 329h1v1h-1zM297 330h1v1h-1zM297 331h1v1h-1zM297 332h1v1h-1zM297 333h1v1h-1zM297 334h1v1h-1zM297 335h1v1h-1zM297 336h1v1h-1zM297 337h1v1h-1zM297 338h1v1h-1zM297 339h1v1h-1zM297 340h1v1h-1zM297 341h1v1h-1zM297 342h2v1h-2zM297 343h1v1h-1zM299 343h7v1h-7zM297 344h1v1h-1zM306 344h6v1h-6zM297 345h1v1h-1zM312 345h7v1h-7zM297 346h1v1h-1zM297 347h1v1h-1zM297 348h1v1h-1zM297 349h1v1h-1zM297 350h1v1h-1zM297 351h1v1h-1zM297 352h1v1h-1zM297 353h1v1h-1zM297 354h1v1h-1zM297 355h1v1h-1zM297 356h1v1h-1zM297 357h1v1h-1zM297 358h1v1h-1zM297 359h1v1h-1zM296 360h1v1h-1zM296 361h1v1h-1zM296 362h1v1h-1zM296 363h1v1h-1zM296 364h1v1h-1zM296 365h1v1h-1zM296 366h1v1h-1zM296 367h1v1h-1zM296 368h2v1h-2zM296 369h1v1h-1zM298 369h7v1h-7zM296 370h1v1h-1zM305 370h1v1h-1zM296 371h1v1h-1zM296 372h1v1h-1zM296 373h1v1h-1zM296 374h1v1h-1zM296 375h1v1h-1zM296 376h1v1h-1zM296 377h1v1h-1zM296 378h1v1h-1zM296 379h1v1h-1zM296 380h1v1h-1zM296 381h1v1h-1zM296 382h1v1h-1zM296 383h1v1h-1zM296 384h1v1h-1zM296 385h1v1h-1zM296 386h1v1h-1zM296 387h1v1h-1zM296 388h1v1h-1zM296 389h1v1h-1zM296 390h1v1h-1zM296 391h1v1h-1zM296 392h1v1h-1zM296 393h1v1h-1zM296 394h1v1h-1zM296 395h8v1h-8zM295 396h1v1h-1zM304 396h1v1h-1zM295 397h1v1h-1zM295 398h1v1h-1zM295 399h1v1h-1zM295 400h1v1h-1zM295 401h1v1h-1zM295 402h1v1h-1zM295 403h1v1h-1zM295 404h1v1h-1zM295 405h1v1h-1zM295 406h1v1h-1zM295 407h1v1h-1zM295 408h1v1h-1zM295 409h1v1h-1zM295 410h1v1h-1zM295 411h1v1h-1zM295 412h1v1h-1zM295 413h1v1h-1zM295 414h1v1h-1zM295 415h1v1h-1zM295 416h1v1h-1zM295 417h1v1h-1zM295 418h1v1h-1zM295 419h1v1h-1zM295 420h1v1h-1zM295 421h8v1h-8zM295 422h1v1h-1zM303 422h1v1h-1zM295 423h1v1h-1zM295 424h1v1h-1zM295 425h1v1h-1zM295 426h1v1h-1zM295 427h1v1h-1zM295 428h1v1h-1zM295 429h1v1h-1zM295 430h1v1h-1zM295 431h1v1h-1zM294 432h1v1h-1zM294 433h1v1h-1zM294 434h1v1h-1zM294 435h1v1h-1zM294 436h1v1h-1zM294 437h1v1h-1zM294 438h1v1h-1zM294 439h1v1h-1zM294 440h1v1h-1zM294 441h1v1h-1zM294 442h1v1h-1zM294 443h1v1h-1zM294 444h1v1h-1zM294 445h1v1h-1zM294 446h1v1h-1zM294 447h8v1h-8zM294 448h1v1h-1zM302 448h2v1h-2zM294 449h1v1h-1zM294 450h1v1h-1zM294 451h1v1h-1zM294 452h1v1h-1zM294 453h1v1h-1zM294 454h1v1h-1zM294 455h1v1h-1zM294 456h1v1h-1zM294 457h1v1h-1zM294 458h1v1h-1zM294 459h1v1h-1zM294 460h1v1h-1zM294 461h1v1h-1zM294 462h1v1h-1zM294 463h1v1h-1zM294 464h1v1h-1zM294 465h1v1h-1zM294 466h1v1h-1zM294 467h1v1h-1zM293 468h1v1h-1zM293 469h1v1h-1zM293 470h1v1h-1zM293 471h1v1h-1zM293 472h1v1h-1zM293 473h8v1h-8zM293 474h1v1h-1zM301 474h7v1h-7zM293 475h1v1h-1zM308 475h7v1h-7zM293 476h1v1h-1zM315 476h1v1h-1zM293 477h1v1h-1zM293 478h1v1h-1zM293 479h1v1h-1zM293 480h1v1h-1zM293 481h1v1h-1zM293 482h1v1h-1zM293 483h1v1h-1zM293 484h1v1h-1zM293 485h1v1h-1zM293 486h1v1h-1zM293 487h1v1h-1zM293 488h1v1h-1zM293 489h1v1h-1zM293 490h1v1h-1zM293 491h1v1h-1zM293 492h1v1h-1zM293 493h1v1h-1zM293 494h1v1h-1zM293 495h1v1h-1zM293 496h1v1h-1zM293 497h1v1h-1zM293 498h1v1h-1zM293 499h7v1h-7zM293 500h1v1h-1zM300 500h2v1h-2zM293 501h1v1h-1zM293 502h1v1h-1zM293 503h1v1h-1zM292 504h1v1h-1zM292 505h1v1h-1zM292 506h1v1h-1zM292 507h1v1h-1zM292 508h1v1h-1zM292 509h1v1h-1zM292 510h1v1h-1zM292 511h1v1h-1zM292 512h1v1h-1zM292 513h1v1h-1zM292 514h1v1h-1zM292 515h1v1h-1zM292 516h1v1h-1zM292 517h1v1h-1zM292 518h1v1h-1zM292 519h1v1h-1zM292 520h1v1h-1zM292 521h1v1h-1zM292 522h1v1h-1zM292 523h1v1h-1zM292 524h1v1h-1zM292 525h7v1h-7zM292 526h1v1h-1zM299 526h3v1h-3zM292 527h1v1h-1zM292 528h1v1h-1zM292 529h1v1h-1zM292 530h1v1h-1zM292 531h1v1h-1zM292 532h1v1h-1zM292 533h1v1h-1zM292 534h1v1h-1zM292 535h1v1h-1zM292 536h1v1h-1zM292 537h1v1h-1zM292 538h1v1h-1zM292 539h1v1h-1zM291 540h1v1h-1zM291 541h1v1h-1zM291 542h1v1h-1zM291 543h1v1h-1zM291 544h1v1h-1zM291 545h1v1h-1zM291 546h1v1h-1zM291 547h1v1h-1zM291 548h1v1h-1zM291 549h1v1h-1zM291 550h1v1h-1zM291 551h7v1h-7zM291 552h1v1h-1zM298 552h3v1h-3zM291 553h1v1h-1zM291 554h1v1h-1zM291 555h1v1h-1zM291 556h1v1h-1zM291 557h1v1h-1zM291 558h1v1h-1zM291 559h1v1h-1zM291 560h1v1h-1zM291 561h1v1h-1zM291 562h1v1h-1zM291 563h1v1h-1zM291 564h1v1h-1zM291 565h1v1h-1zM291 566h1v1h-1zM291 567h1v1h-1zM291 568h1v1h-1zM291 569h1v1h-1zM291 570h1v1h-1zM291 571h1v1h-1zM291 572h1v1h-1zM291 573h1v1h-1zM291 574h1v1h-1zM291 575h1v1h-1zM290 576h2v1h-2zM290 577h8v1h-8zM290 578h2v1h-2zM298 578h2v1h-2zM290 579h2v1h-2zM290 580h2v1h-2zM290 581h2v1h-2zM290 582h1v1h-1zM397 582h1v1h-1zM290 583h1v1h-1zM397 583h1v1h-1zM290 584h1v1h-1zM312 584h1v1h-1zM397 584h1v1h-1zM290 585h1v1h-1zM312 585h1v1h-1zM397 585h1v1h-1zM290 586h1v1h-1zM312 586h1v1h-1zM397 586h1v1h-1zM290 587h1v1h-1zM312 587h1v1h-1zM333 587h1v1h-1zM397 587h1v1h-1zM290 588h1v1h-1zM312 588h1v1h-1zM333 588h1v1h-1zM397 588h1v1h-1zM290 589h1v1h-1zM312 589h1v1h-1zM333 589h1v1h-1zM397 589h1v1h-1zM290 590h1v1h-1zM312 590h1v1h-1zM333 590h1v1h-1zM397 590h1v1h-1zM290 591h3v1h-3zM312 591h1v1h-1zM333 591h1v1h-1zM354 591h1v1h-1zM397 591h1v1h-1zM293 592h7v1h-7zM311 592h1v1h-1zM333 592h1v1h-1zM354 592h1v1h-1zM397 592h1v1h-1zM300 593h7v1h-7zM311 593h1v1h-1zM333 593h1v1h-1zM354 593h1v1h-1zM397 593h1v1h-1zM307 594h7v1h-7zM333 594h1v1h-1zM354 594h1v1h-1zM375 594h1v1h-1zM397 594h1v1h-1zM314 595h6v1h-6zM333 595h1v1h-1zM354 595h1v1h-1zM375 595h1v1h-1zM396 595h1v1h-1zM320 596h7v1h-7zM333 596h1v1h-1zM354 596h1v1h-1zM375 596h1v1h-1zM396 596h1v1h-1zM327 597h7v1h-7zM354 597h1v1h-1zM375 597h1v1h-1zM396 597h1v1h-1zM503 597h1v1h-1zM334 598h7v1h-7zM354 598h1v1h-1zM375 598h1v1h-1zM396 598h1v1h-1zM503 598h1v1h-1zM341 599h7v1h-7zM354 599h1v1h-1zM375 599h1v1h-1zM396 599h1v1h-1zM503 599h1v1h-1zM348 600h7v1h-7zM375 600h1v1h-1zM396 600h1v1h-1zM418 600h1v1h-1zM503 600h1v1h-1zM354 601h7v1h-7zM375 601h1v1h-1zM396 601h1v1h-1zM418 601h1v1h-1zM503 601h1v1h-1zM361 602h7v1h-7zM375 602h1v1h-1zM396 602h1v1h-1zM418 602h1v1h-1zM503 602h1v1h-1zM368 603h8v1h-8zM396 603h1v1h-1zM418 603h1v1h-1zM439 603h1v1h-1zM503 603h1v1h-1zM375 604h6v1h-6zM396 604h1v1h-1zM418 604h1v1h-1zM439 604h1v1h-1zM503 604h1v1h-1zM381 605h7v1h-7zM396 605h1v1h-1zM417 605h1v1h-1zM439 605h1v1h-1zM503 605h1v1h-1zM388 606h7v1h-7zM396 606h1v1h-1zM417 606h1v1h-1zM439 606h1v1h-1zM460 606h1v1h-1zM503 606h1v1h-1zM395 607h7v1h-7zM417 607h1v1h-1zM439 607h1v1h-1zM460 607h1v1h-1zM503 607h1v1h-1zM402 608h7v1h-7zM417 608h1v1h-1zM439 608h1v1h-1zM460 608h1v1h-1zM502 608h1v1h-1zM409 609h6v1h-6zM417 609h1v1h-1zM439 609h1v1h-1zM460 609h1v1h-1zM481 609h1v1h-1zM502 609h1v1h-1zM415 610h7v1h-7zM439 610h1v1h-1zM460 610h1v1h-1zM481 610h1v1h-1zM502 610h1v1h-1zM422 611h7v1h-7zM439 611h1v1h-1zM460 611h1v1h-1zM481 611h1v1h-1zM502 611h1v1h-1zM429 612h7v1h-7zM439 612h1v1h-1zM460 612h1v1h-1zM481 612h1v1h-1zM502 612h1v1h-1zM436 613h7v1h-7zM460 613h1v1h-1zM481 613h1v1h-1zM502 613h1v1h-1zM609 613h1v1h-1zM443 614h6v1h-6zM460 614h1v1h-1zM481 614h1v1h-1zM502 614h1v1h-1zM609 614h1v1h-1zM449 615h7v1h-7zM460 615h1v1h-1zM481 615h1v1h-1zM502 615h1v1h-1zM609 615h1v1h-1zM456 616h7v1h-7zM481 616h1v1h-1zM502 616h1v1h-1zM524 616h1v1h-1zM609 616h1v1h-1zM463 617h7v1h-7zM481 617h1v1h-1zM502 617h1v1h-1zM524 617h1v1h-1zM609 617h1v1h-1zM470 618h6v1h-6zM481 618h1v1h-1zM502 618h1v1h-1zM523 618h1v1h-1zM609 618h1v1h-1zM476 619h7v1h-7zM502 619h1v1h-1zM523 619h1v1h-1zM545 619h1v1h-1zM609 619h1v1h-1zM483 620h7v1h-7zM502 620h1v1h-1zM523 620h1v1h-1zM545 620h1v1h-1zM609 620h1v1h-1zM490 621h7v1h-7zM502 621h1v1h-1zM523 621h1v1h-1zM545 621h1v1h-1zM608 621h1v1h-1zM497 622h7v1h-7zM523 622h1v1h-1zM545 622h1v1h-1zM566 622h1v1h-1zM608 622h1v1h-1zM504 623h6v1h-6zM523 623h1v1h-1zM545 623h1v1h-1zM566 623h1v1h-1zM608 623h1v1h-1zM510 624h7v1h-7zM523 624h1v1h-1zM545 624h1v1h-1zM566 624h1v1h-1zM608 624h1v1h-1zM517 625h7v1h-7zM545 625h1v1h-1zM566 625h1v1h-1zM587 625h1v1h-1zM608 625h1v1h-1zM524 626h7v1h-7zM545 626h1v1h-1zM566 626h1v1h-1zM587 626h1v1h-1zM608 626h1v1h-1zM531 627h7v1h-7zM545 627h1v1h-1zM566 627h1v1h-1zM587 627h1v1h-1zM608 627h1v1h-1zM538 628h7v1h-7zM566 628h1v1h-1zM587 628h1v1h-1zM608 628h1v1h-1zM544 629h7v1h-7zM566 629h1v1h-1zM587 629h1v1h-1zM608 629h1v1h-1zM715 629h1v1h-1zM551 630h7v1h-7zM566 630h1v1h-1zM587 630h1v1h-1zM608 630h1v1h-1zM715 630h1v1h-1zM558 631h7v1h-7zM566 631h1v1h-1zM587 631h1v1h-1zM608 631h1v1h-1zM629 631h1v1h-1zM715 631h1v1h-1zM565 632h7v1h-7zM587 632h1v1h-1zM608 632h1v1h-1zM629 632h1v1h-1zM715 632h1v1h-1zM572 633h6v1h-6zM587 633h1v1h-1zM608 633h1v1h-1zM629 633h1v1h-1zM715 633h1v1h-1zM578 634h7v1h-7zM587 634h1v1h-1zM608 634h1v1h-1zM629 634h1v1h-1zM651 634h1v1h-1zM714 634h1v1h-1zM585 635h7v1h-7zM608 635h1v1h-1zM629 635h1v1h-1zM651 635h1v1h-1zM714 635h1v1h-1zM592 636h7v1h-7zM608 636h1v1h-1zM629 636h1v1h-1zM651 636h1v1h-1zM714 636h1v1h-1zM599 637h6v1h-6zM608 637h1v1h-1zM629 637h1v1h-1zM651 637h1v1h-1zM672 637h1v1h-1zM714 637h1v1h-1zM605 638h7v1h-7zM629 638h1v1h-1zM651 638h1v1h-1zM672 638h1v1h-1zM714 638h1v1h-1zM612 639h7v1h-7zM629 639h1v1h-1zM651 639h1v1h-1zM672 639h1v1h-1zM714 639h1v1h-1zM619 640h7v1h-7zM629 640h1v1h-1zM651 640h1v1h-1zM672 640h1v1h-1zM693 640h1v1h-1zM714 640h1v1h-1zM626 641h7v1h-7zM650 641h1v1h-1zM672 641h1v1h-1zM693 641h1v1h-1zM714 641h1v1h-1zM633 642h6v1h-6zM650 642h1v1h-1zM672 642h1v1h-1zM693 642h1v1h-1zM714 642h1v1h-1zM639 643h7v1h-7zM650 643h1v1h-1zM672 643h1v1h-1zM693 643h1v1h-1zM714 643h1v1h-1zM646 644h7v1h-7zM672 644h1v1h-1zM693 644h1v1h-1zM714 644h1v1h-1zM653 645h7v1h-7zM672 645h1v1h-1zM693 645h1v1h-1zM714 645h1v1h-1zM660 646h7v1h-7zM672 646h1v1h-1zM693 646h1v1h-1zM714 646h1v1h-1zM667 647h6v1h-6zM693 647h1v1h-1zM714 647h1v1h-1zM673 648h7v1h-7zM693 648h1v1h-1zM714 648h1v1h-1zM680 649h7v1h-7zM693 649h1v1h-1zM714 649h1v1h-1zM687 650h7v1h-7zM714 650h1v1h-1zM694 651h6v1h-6zM714 651h1v1h-1zM700 652h7v1h-7zM714 652h1v1h-1zM707 653h8v1h-8zM714 654h1v1h-1z"/><path fill="#00ff76" d="M297 363h1v1h-1zM466 388h1v1h-1z"/><path fill="#00ff78" d="M298 364h2v1h-2z"/><path fill="#00ff79" d="M300 365h2v1h-2zM464 389h2v1h-2z"/><path fill="#00ff7a" d="M302 366h2v1h-2z"/><path fill="#00ff7b" d="M304 367h2v1h-2zM462 390h2v1h-2z"/><path fill="#00ff7d" d="M306 368h1v1h-1zM460 391h2v1h-2z"/><path fill="#00ff7c" d="M307 368h1v1h-1z"/><path fill="#00ff7e" d="M308 369h2v1h-2z"/><path fill="#00ff7f" d="M310 370h2v1h-2zM458 392h2v1h-2z"/><path fill="#00ff80" d="M312 371h1v1h-1z"/><path fill="#00ff81" d="M313 372h2v1h-2zM457 393h1v1h-1z"/><path fill="#00ff83" d="M315 373h1v1h-1zM456 394h1v1h-1z"/><path fill="#00ff84" d="M316 374h2v1h-2z"/><path fill="#00ff85" d="M318 375h1v1h-1zM454 395h2v1h-2z"/><path fill="#00ff87" d="M319 376h1v1h-1zM453 396h1v1h-1z"/><path fill="#00ff86" d="M320 376h1v1h-1z"/><path fill="#00ff88" d="M321 377h1v1h-1z"/><path fill="#00ff89" d="M322 378h2v1h-2zM452 397h1v1h-1z"/><path fill="#00ff8a" d="M324 379h1v1h-1z"/><path fill="#00ff8c" d="M325 380h1v1h-1z"/><path fill="#00ff8d" d="M326 381h1v1h-1zM449 399h1v1h-1z"/><path fill="#00ff8e" d="M327 382h1v1h-1z"/><path fill="#00ff90" d="M328 383h1v1h-1zM447 401h1v1h-1z"/><path fill="#00ff91" d="M329 384h1v1h-1zM446 401h1v1h-1z"/><path fill="#00ff92" d="M330 385h1v1h-1z"/><path fill="#00ff94" d="M331 386h1v1h-1zM444 403h1v1h-1z"/><path fill="#00ff95" d="M332 387h2v1h-2z"/><path fill="#00ff97" d="M334 388h1v1h-1zM442 404h2v1h-2z"/><path fill="#00ff99" d="M335 389h1v1h-1z"/><path fill="#00ff9b" d="M336 390h1v1h-1z"/><path fill="#00ff9d" d="M337 391h1v1h-1zM441 406h1v1h-1z"/><path fill="#00ffa0" d="M338 392h1v1h-1z"/><path fill="#00ffa2" d="M339 393h1v1h-1zM440 408h1v1h-1z"/><path fill="#00ffa4" d="M340 394h1v1h-1z"/><path fill="#00ffa6" d="M341 395h1v1h-1z"/><path fill="#00ffa8" d="M341 396h1v1h-1z"/><path fill="#00ffaa" d="M342 397h1v1h-1zM438 411h1v1h-1z"/><path fill="#00ffad" d="M342 398h1v1h-1zM437 412h1v1h-1z"/><path fill="#00ffaf" d="M343 399h1v1h-1zM437 413h1v1h-1z"/><path fill="#00ffb1" d="M344 400h1v1h-1z"/><path fill="#00ffb3" d="M344 401h1v1h-1z"/><path fill="#00ffb5" d="M345 402h1v1h-1zM435 415h1v1h-1z"/><path fill="#00ffb8" d="M345 403h1v1h-1z"/><path fill="#00ffba" d="M346 404h1v1h-1zM434 417h1v1h-1z"/><path fill="#00ffbc" d="M346 405h1v1h-1z"/><path fill="#00ffbe" d="M347 406h1v1h-1z"/><path fill="#00ffc1" d="M347 407h1v1h-1z"/><path fill="#00ffc3" d="M348 408h1v1h-1z"/><path fill="#00ffc5" d="M349 409h1v1h-1zM431 421h1v1h-1z"/><path fill="#00ffc7" d="M349 410h1v1h-1zM431 422h1v1h-1z"/><path fill="#00ffca" d="M350 411h1v1h-1zM430 423h1v1h-1z"/><path fill="#00ffcc" d="M350 412h1v1h-1z"/><path fill="#00ffce" d="M351 413h1v1h-1z"/><path fill="#00ffd1" d="M351 414h1v1h-1z"/><path fill="#00ffd3" d="M352 415h1v1h-1z"/><path fill="#00ffd5" d="M352 416h1v1h-1zM353 417h1v1h-1zM428 427h1v1h-1zM427 428h1v1h-1z"/><path fill="#00ffd6" d="M353 418h1v1h-1zM427 429h1v1h-1z"/><path fill="#00ffd7" d="M354 419h1v1h-1zM354 420h1v1h-1zM426 430h1v1h-1z"/><path fill="#00ffd8" d="M354 421h1v1h-1zM426 431h1v1h-1zM426 432h1v1h-1z"/><path fill="#00ffd9" d="M355 422h1v1h-1zM355 423h1v1h-1zM426 433h1v1h-1z"/><path fill="#00ffda" d="M355 424h1v1h-1zM426 434h1v1h-1z"/><path fill="#00ffdb" d="M355 425h1v1h-1zM425 435h1v1h-1zM425 436h1v1h-1z"/><path fill="#00ffdc" d="M355 426h1v1h-1zM355 427h1v1h-1zM425 437h1v1h-1z"/><path fill="#00ffdd" d="M355 428h1v1h-1zM425 438h1v1h-1z"/><path fill="#00ffde" d="M355 429h1v1h-1zM356 430h1v1h-1zM425 439h1v1h-1zM424 440h1v1h-1z"/><path fill="#00ffdf" d="M356 431h1v1h-1zM424 441h1v1h-1z"/><path fill="#00ffe0" d="M356 432h1v1h-1zM424 442h1v1h-1z"/><path fill="#00ffe1" d="M356 433h1v1h-1zM356 434h1v1h-1zM424 443h1v1h-1zM424 444h1v1h-1z"/><path fill="#00ffe2" d="M356 435h1v1h-1zM423 445h1v1h-1z"/><path fill="#00ffe3" d="M356 436h1v1h-1zM356 437h1v1h-1zM423 446h1v1h-1z"/><path fill="#00ffe4" d="M357 438h1v1h-1zM423 447h1v1h-1zM423 448h1v1h-1z"/><path fill="#00ffe5" d="M357 439h1v1h-1zM357 440h1v1h-1zM423 449h1v1h-1z"/><path fill="#00ffe6" d="M357 441h1v1h-1zM422 450h1v1h-1z"/><path fill="#00ffe7" d="M357 442h1v1h-1zM422 451h1v1h-1zM422 452h1v1h-1z"/><path fill="#00ffe8" d="M357 443h1v1h-1zM357 444h1v1h-1zM422 453h1v1h-1z"/><path fill="#00ffe9" d="M357 445h1v1h-1zM422 454h1v1h-1z"/><path fill="#00ffea" d="M358 446h1v1h-1zM358 447h1v1h-1zM421 455h1v1h-1zM421 456h1v1h-1z"/><path fill="#00ffeb" d="M358 448h1v1h-1zM421 457h1v1h-1z"/><path fill="#00ffec" d="M358 449h1v1h-1zM421 458h1v1h-1zM421 459h1v1h-1z"/><path fill="#00ffed" d="M358 450h1v1h-1zM358 451h1v1h-1zM421 460h1v1h-1z"/><path fill="#00ffee" d="M358 452h1v1h-1zM420 461h1v1h-1z"/><path fill="#00ffef" d="M358 453h1v1h-1zM359 454h1v1h-1zM420 462h1v1h-1zM420 463h1v1h-1z"/><path fill="#00fff0" d="M359 455h1v1h-1zM420 464h1v1h-1z"/><path fill="#00fff1" d="M359 456h1v1h-1zM420 465h1v1h-1z"/><path fill="#00fff2" d="M359 457h1v1h-1zM359 458h1v1h-1zM419 466h1v1h-1zM419 467h1v1h-1z"/><path fill="#00fff3" d="M359 459h1v1h-1zM419 468h1v1h-1z"/><path fill="#00fff4" d="M359 460h1v1h-1zM359 461h1v1h-1zM419 469h1v1h-1z"/><path fill="#00fff5" d="M360 462h1v1h-1zM419 470h1v1h-1zM418 471h1v1h-1z"/><path fill="#00fff6" d="M360 463h1v1h-1zM418 472h1v1h-1z"/><path fill="#00fff7" d="M360 464h1v1h-1zM360 465h1v1h-1zM418 473h1v1h-1z"/><path fill="#00fff8" d="M360 466h1v1h-1zM418 474h1v1h-1zM418 475h1v1h-1z"/><path fill="#00fff9" d="M360 467h1v1h-1zM360 468h1v1h-1zM417 476h1v1h-1z"/><path fill="#00fffa" d="M360 469h1v1h-1zM417 477h1v1h-1z"/><path fill="#00fffb" d="M361 470h1v1h-1zM361 471h1v1h-1zM417 478h1v1h-1zM417 479h1v1h-1z"/><path fill="#00fffc" d="M361 472h1v1h-1zM417 480h1v1h-1z"/><path fill="#00fffd" d="M361 473h1v1h-1zM416 481h1v1h-1z"/><path fill="#00fffe" d="M361 474h1v1h-1zM361 475h1v1h-1zM416 482h1v1h-1zM416 483h1v1h-1z"/><path fill="#00ffff" d="M361 476h1v1h-1zM416 484h1v1h-1z"/><path fill="#00feff" d="M361 477h1v1h-1zM362 478h1v1h-1zM416 485h1v1h-1z"/><path fill="#00fdff" d="M362 479h1v1h-1zM415 486h1v1h-1zM415 487h1v1h-1z"/><path fill="#00fcff" d="M362 480h1v1h-1zM415 488h1v1h-1z"/><path fill="#00fbff" d="M362 481h1v1h-1zM362 482h1v1h-1zM415 489h1v1h-1zM415 490h1v1h-1z"/><path fill="#00faff" d="M362 483h1v1h-1zM415 491h1v1h-1z"/><path fill="#00f9ff" d="M362 484h1v1h-1zM414 492h1v1h-1z"/><path fill="#00f8ff" d="M362 485h1v1h-1zM363 486h1v1h-1zM414 493h1v1h-1zM414 494h1v1h-1z"/><path fill="#00f7ff" d="M363 487h1v1h-1zM414 495h1v1h-1z"/><path fill="#00f6ff" d="M363 488h1v1h-1zM363 489h1v1h-1zM414 496h1v1h-1z"/><path fill="#00f5ff" d="M363 490h1v1h-1zM413 497h1v1h-1zM413 498h1v1h-1z"/><path fill="#00f4ff" d="M363 491h1v1h-1zM363 492h1v1h-1zM413 499h1v1h-1z"/><path fill="#00f3ff" d="M364 493h1v1h-1zM413 500h1v1h-1z"/><path fill="#00f2ff" d="M364 494h1v1h-1zM413 501h1v1h-1zM412 502h1v1h-1z"/><path fill="#00f1ff" d="M364 495h1v1h-1zM364 496h1v1h-1zM412 503h1v1h-1z"/><path fill="#00f0ff" d="M364 497h1v1h-1zM412 504h1v1h-1z"/><path fill="#00efff" d="M364 498h1v1h-1zM364 499h1v1h-1zM412 505h1v1h-1zM412 506h1v1h-1z"/><path fill="#00eeff" d="M364 500h1v1h-1zM411 507h1v1h-1z"/><path fill="#00edff" d="M365 501h1v1h-1zM365 502h1v1h-1zM411 508h1v1h-1z"/><path fill="#00ecff" d="M365 503h1v1h-1zM411 509h1v1h-1zM411 510h1v1h-1z"/><path fill="#00ebff" d="M365 504h1v1h-1zM411 511h1v1h-1z"/><path fill="#00eaff" d="M365 505h1v1h-1zM365 506h1v1h-1zM410 512h1v1h-1z"/><path fill="#00e9ff" d="M365 507h1v1h-1zM410 513h1v1h-1zM410 514h1v1h-1z"/><path fill="#00e8ff" d="M365 508h1v1h-1zM366 509h1v1h-1zM410 515h1v1h-1z"/><path fill="#00e7ff" d="M366 510h1v1h-1zM410 516h1v1h-1z"/><path fill="#00e6ff" d="M366 511h1v1h-1zM409 517h1v1h-1zM409 518h1v1h-1z"/><path fill="#00e5ff" d="M366 512h1v1h-1z"/><path fill="#00e4ff" d="M366 513h1v1h-1zM409 519h1v1h-1z"/><path fill="#00e2ff" d="M366 514h1v1h-1z"/><path fill="#00e1ff" d="M366 515h1v1h-1zM409 521h1v1h-1z"/><path fill="#00dfff" d="M366 516h1v1h-1z"/><path fill="#00deff" d="M367 517h1v1h-1zM408 523h1v1h-1z"/><path fill="#00dcff" d="M367 518h1v1h-1zM408 524h1v1h-1z"/><path fill="#00dbff" d="M367 519h1v1h-1zM408 525h1v1h-1z"/><path fill="#00d9ff" d="M367 520h1v1h-1zM408 526h1v1h-1z"/><path fill="#00d8ff" d="M367 521h1v1h-1zM408 527h1v1h-1z"/><path fill="#00d6ff" d="M367 522h1v1h-1zM407 528h1v1h-1z"/><path fill="#00d4ff" d="M367 523h1v1h-1zM407 529h1v1h-1z"/><path fill="#00d3ff" d="M367 524h1v1h-1zM407 530h1v1h-1z"/><path fill="#00d2ff" d="M368 525h1v1h-1z"/><path fill="#00d0ff" d="M368 526h1v1h-1zM407 532h1v1h-1z"/><path fill="#00ceff" d="M368 527h1v1h-1zM406 533h1v1h-1z"/><path fill="#00cdff" d="M368 528h1v1h-1z"/><path fill="#00cbff" d="M368 529h1v1h-1zM406 535h1v1h-1z"/><path fill="#00caff" d="M368 530h1v1h-1z"/><path fill="#00c8ff" d="M368 531h1v1h-1zM406 537h1v1h-1z"/><path fill="#00c7ff" d="M368 532h1v1h-1z"/><path fill="#00c5ff" d="M369 533h1v1h-1z"/><path fill="#00c4ff" d="M369 534h1v1h-1zM405 539h1v1h-1z"/><path fill="#00c2ff" d="M369 535h1v1h-1z"/><path fill="#00c1ff" d="M369 536h1v1h-1zM405 541h1v1h-1z"/><path fill="#00bfff" d="M369 537h1v1h-1z"/><path fill="#00beff" d="M369 538h1v1h-1zM404 543h1v1h-1z"/><path fill="#00bcff" d="M369 539h1v1h-1zM404 544h1v1h-1z"/><path fill="#00bbff" d="M369 540h1v1h-1zM404 545h1v1h-1z"/><path fill="#00b9ff" d="M370 541h1v1h-1zM404 546h1v1h-1z"/><path fill="#00b8ff" d="M370 542h1v1h-1zM404 547h1v1h-1z"/><path fill="#00b6ff" d="M370 543h1v1h-1zM403 548h1v1h-1z"/><path fill="#00b5ff" d="M370 544h1v1h-1z"/><path fill="#00b3ff" d="M370 545h1v1h-1zM403 550h1v1h-1z"/><path fill="#00b1ff" d="M370 546h1v1h-1zM403 551h1v1h-1z"/><path fill="#00b0ff" d="M370 547h1v1h-1zM403 552h1v1h-1z"/><path fill="#00aeff" d="M370 548h1v1h-1zM403 553h1v1h-1z"/><path fill="#00adff" d="M371 549h1v1h-1z"/><path fill="#00abff" d="M371 550h1v1h-1zM402 555h1v1h-1z"/><path fill="#00aaff" d="M371 551h1v1h-1z"/><path fill="#00a8ff" d="M371 552h1v1h-1zM402 557h1v1h-1z"/><path fill="#00a7ff" d="M371 553h1v1h-1z"/><path fill="#00a5ff" d="M371 554h1v1h-1z"/><path fill="#00a4ff" d="M371 555h1v1h-1zM401 559h1v1h-1z"/><path fill="#00a2ff" d="M371 556h1v1h-1z"/><path fill="#00a1ff" d="M372 557h1v1h-1zM401 561h1v1h-1z"/><path fill="#009fff" d="M372 558h1v1h-1z"/><path fill="#009eff" d="M372 559h1v1h-1zM401 563h1v1h-1z"/><path fill="#009cff" d="M372 560h1v1h-1zM400 564h1v1h-1z"/><path fill="#009bff" d="M372 561h1v1h-1zM400 565h1v1h-1z"/><path fill="#0099ff" d="M372 562h1v1h-1zM400 566h1v1h-1z"/><path fill="#0097ff" d="M372 563h1v1h-1z"/><path fill="#0096ff" d="M372 564h1v1h-1zM400 568h1v1h-1z"/><path fill="#0095ff" d="M373 565h1v1h-1z"/><path fill="#0093ff" d="M373 566h1v1h-1zM399 570h1v1h-1z"/><path fill="#0092ff" d="M373 567h1v1h-1z"/><path fill="#0090ff" d="M373 568h1v1h-1zM399 572h1v1h-1z"/><path fill="#008eff" d="M373 569h1v1h-1zM399 573h1v1h-1z"/><path fill="#008dff" d="M373 570h1v1h-1z"/><path fill="#008aff" d="M373 571h1v1h-1z"/><path fill="#0085ff" d="M373 572h1v1h-1z"/><path fill="#0082ff" d="M374 573h1v1h-1z"/><path fill="#007eff" d="M374 574h1v1h-1z"/><path fill="#0079ff" d="M374 575h1v1h-1z"/><path fill="#0075ff" d="M374 576h1v1h-1z"/><path fill="#0071ff" d="M374 577h1v1h-1z"/><path fill="#006cff" d="M374 578h1v1h-1z"/><path fill="#0068ff" d="M374 579h1v1h-1z"/><path fill="#0064ff" d="M374 580h1v1h-1z"/><path fill="#0060ff" d="M375 581h1v1h-1z"/><path fill="#005cff" d="M375 582h1v1h-1zM396 585h1v1h-1z"/><path fill="#0058ff" d="M375 583h1v1h-1zM396 586h1v1h-1z"/><path fill="#0054ff" d="M375 584h1v1h-1zM396 587h1v1h-1z"/><path fill="#004fff" d="M375 585h1v1h-1z"/><path fill="#004bff" d="M375 586h1v1h-1zM396 589h1v1h-1z"/><path fill="#0047ff" d="M375 587h1v1h-1zM395 590h1v1h-1z"/><path fill="#0043ff" d="M375 588h1v1h-1z"/><path fill="#003fff" d="M376 589h1v1h-1z"/><path fill="#003bff" d="M376 590h1v1h-1z"/><path fill="#0036ff" d="M376 591h1v1h-1zM395 594h1v1h-1z"/><path fill="#0032ff" d="M376 592h1v1h-1z"/><path fill="#002eff" d="M376 593h1v1h-1z"/><path fill="#002aff" d="M376 594h1v1h-1z"/><path fill="#0025ff" d="M376 595h1v1h-1z"/><path fill="#0022ff" d="M377 596h1v1h-1z"/><path fill="#001dff" d="M377 597h1v1h-1z"/><path fill="#0019ff" d="M377 598h1v1h-1z"/><path fill="#0015ff" d="M377 599h1v1h-1z"/><path fill="#0011ff" d="M377 600h1v1h-1z"/><path fill="#000cff" d="M377 601h1v1h-1z"/><path fill="#0008ff" d="M377 602h1v1h-1z"/><path fill="#0004ff" d="M378 603h1v1h-1zM390 605h2v1h-2z"/><path fill="#0000ff" d="M378 604h1v1h-1zM383 605h3v1h-3z"/><path fill="#0001ff" d="M379 604h2v1h-2zM386 605h1v1h-1z"/><path fill="#0002ff" d="M381 604h1v1h-1zM387 605h2v1h-2z"/><path fill="#0003ff" d="M382 604h1v1h-1zM389 605h1v1h-1z"/><path fill="#0005ff" d="M392 605h1v1h-1z"/><path fill="#00e3ff" d="M409 520h1v1h-1z"/><path fill="#00e0ff" d="M409 522h1v1h-1z"/><path fill="#00d1ff" d="M407 531h1v1h-1z"/><path fill="#00ccff" d="M406 534h1v1h-1z"/><path fill="#00c9ff" d="M406 536h1v1h-1z"/><path fill="#00c6ff" d="M405 538h1v1h-1z"/><path fill="#00c3ff" d="M405 540h1v1h-1z"/><path fill="#00c0ff" d="M405 542h1v1h-1z"/><path fill="#00b4ff" d="M403 549h1v1h-1z"/><path fill="#00acff" d="M402 554h1v1h-1z"/><path fill="#00a9ff" d="M402 556h1v1h-1z"/><path fill="#00a6ff" d="M402 558h1v1h-1z"/><path fill="#00a3ff" d="M401 560h1v1h-1z"/><path fill="#00a0ff" d="M401 562h1v1h-1z"/><path fill="#0098ff" d="M400 567h1v1h-1z"/><path fill="#0094ff" d="M399 569h1v1h-1z"/><path fill="#0091ff" d="M399 571h1v1h-1z"/><path fill="#008cff" d="M398 574h1v1h-1z"/><path fill="#0088ff" d="M398 575h1v1h-1z"/><path fill="#0084ff" d="M398 576h1v1h-1z"/><path fill="#0080ff" d="M398 577h1v1h-1z"/><path fill="#007cff" d="M398 578h1v1h-1z"/><path fill="#0077ff" d="M397 579h1v1h-1z"/><path fill="#0072ff" d="M397 580h1v1h-1z"/><path fill="#006eff" d="M397 581h1v1h-1z"/><path fill="#006aff" d="M397 582h1v1h-1z"/><path fill="#0066ff" d="M397 583h1v1h-1z"/><path fill="#0061ff" d="M397 584h1v1h-1z"/><path fill="#0050ff" d="M396 588h1v1h-1z"/><path fill="#0042ff" d="M395 591h1v1h-1z"/><path fill="#003eff" d="M395 592h1v1h-1z"/><path fill="#003aff" d="M395 593h1v1h-1z"/><path fill="#0031ff" d="M394 595h1v1h-1z"/><path fill="#002cff" d="M394 596h1v1h-1z"/><path fill="#0028ff" d="M394 597h1v1h-1z"/><path fill="#0024ff" d="M394 598h1v1h-1z"/><path fill="#0020ff" d="M394 599h1v1h-1z"/><path fill="#001bff" d="M393 600h1v1h-1z"/><path fill="#0016ff" d="M393 601h1v1h-1z"/><path fill="#0012ff" d="M393 602h1v1h-1z"/><path fill="#000eff" d="M393 603h1v1h-1z"/><path fill="#000aff" d="M393 604h1v1h-1z"/><path fill="#00ff9a" d="M442 405h1v1h-1z"/><path fill="#00ff9f" d="M440 407h1v1h-1z"/><path fill="#00ffa5" d="M439 409h1v1h-1z"/><path fill="#00ffa7" d="M439 410h1v1h-1z"/><path fill="#00ffb2" d="M436 414h1v1h-1z"/><path fill="#00ffb7" d="M435 416h1v1h-1z"/><path fill="#00ffbd" d="M433 418h1v1h-1z"/><path fill="#00ffbf" d="M433 419h1v1h-1z"/><path fill="#00ffc2" d="M432 420h1v1h-1z"/><path fill="#00ffcd" d="M430 424h1v1h-1z"/><path fill="#00ffcf" d="M429 425h1v1h-1z"/><path fill="#00ffd2" d="M428 426h1v1h-1z"/><path fill="#00ff93" d="M445 402h1v1h-1z"/><path fill="#00ff8f" d="M448 400h1v1h-1z"/><path fill="#00ff8b" d="M450 398h2v1h-2z"/><path fill="#00ff75" d="M467 388h1v1h-1z"/><path fill="#00ff6d" d="M468 387h1v1h-1z"/><path fill="#00ff6c" d="M469 387h1v1h-1z"/><path fill="#00ff63" d="M470 386h1v1h-1z"/><path fill="#00ff62" d="M471 386h1v1h-1z"/><path fill="#00ff5a" d="M472 385h1v1h-1z"/><path fill="#00ff59" d="M473 385h1v1h-1z"/><path fill="#00ff50" d="M474 384h2v1h-2z"/><path fill="#00ff4f" d="M476 384h1v1h-1z"/><path fill="#00ff4b" d="M477 383h1v1h-1z"/><path fill="#00ff4a" d="M478 383h2v1h-2z"/><path fill="#00ff45" d="M480 382h2v1h-2z"/><path fill="#00ff44" d="M482 382h1v1h-1z"/><path fill="#00ff40" d="M483 381h1v1h-1z"/><path fill="#00ff3f" d="M484 381h1v1h-1z"/><path fill="#00ff3e" d="M485 381h1v1h-1z"/><path fill="#00ff3a" d="M486 380h1v1h-1z"/><path fill="#00ff39" d="M487 380h2v1h-2z"/><path fill="#00ff34" d="M489 379h2v1h-2z"/><path fill="#00ff33" d="M491 379h2v1h-2z"/><path fill="#00ff2e" d="M493 378h2v1h-2z"/><path fill="#00ff2d" d="M495 378h1v1h-1z"/><path fill="#00ff29" d="M496 377h1v1h-1z"/><path fill="#00ff28" d="M497 377h1v1h-1z"/><path fill="#00ff27" d="M498 377h2v1h-2z"/><path fill="#00ff22" d="M500 376h2v1h-2z"/><path fill="#00ff21" d="M502 376h2v1h-2z"/><path fill="#00ff1b" d="M504 375h1v1h-1z"/><path fill="#00ff1a" d="M505 375h1v1h-1z"/><path fill="#00ff19" d="M506 375h1v1h-1z"/><path fill="#00ff18" d="M507 375h1v1h-1z"/><path fill="#00ff10" d="M508 374h1v1h-1z"/><path fill="#00ff0f" d="M509 374h1v1h-1z"/><path fill="#00ff0e" d="M510 374h1v1h-1z"/><path fill="#00ff0d" d="M511 374h1v1h-1z"/><path fill="#00ff06" d="M512 373h1v1h-1z"/><path fill="#00ff05" d="M513 373h1v1h-1z"/><path fill="#00ff04" d="M514 373h1v1h-1z"/><path fill="#00ff03" d="M515 373h1v1h-1z"/><path fill="#05ff00" d="M516 372h1v1h-1z"/><path fill="#06ff00" d="M517 372h1v1h-1z"/><path fill="#07ff00" d="M518 372h1v1h-1z"/><path fill="#0fff00" d="M519 371h1v1h-1z"/><path fill="#10ff00" d="M520 371h1v1h-1z"/><path fill="#11ff00" d="M521 371h1v1h-1z"/><path fill="#12ff00" d="M522 371h1v1h-1z"/><path fill="#1aff00" d="M523 370h1v1h-1z"/><path fill="#1bff00" d="M524 370h2v1h-2z"/><path fill="#1cff00" d="M526 370h1v1h-1z"/><path fill="#24ff00" d="M527 369h1v1h-1z"/><path fill="#25ff00" d="M528 369h1v1h-1z"/><path fill="#26ff00" d="M529 369h1v1h-1z"/><path fill="#2eff00" d="M530 368h1v1h-1z"/><path fill="#2fff00" d="M531 368h1v1h-1z"/><path fill="#30ff00" d="M532 368h1v1h-1z"/><path fill="#38ff00" d="M533 367h1v1h-1z"/><path fill="#39ff00" d="M534 367h1v1h-1z"/><path fill="#3aff00" d="M535 367h1v1h-1z"/><path fill="#41ff00" d="M536 366h1v1h-1z"/><path fill="#42ff00" d="M537 366h1v1h-1z"/><path fill="#43ff00" d="M538 366h1v1h-1z"/><path fill="#4bff00" d="M539 365h1v1h-1z"/><path fill="#4cff00" d="M540 365h1v1h-1z"/><path fill="#54ff00" d="M541 364h1v1h-1z"/><path fill="#55ff00" d="M542 364h1v1h-1z"/><path fill="#56ff00" d="M543 364h1v1h-1z"/><path fill="#5dff00" d="M544 363h1v1h-1z"/><path fill="#5eff00" d="M545 363h1v1h-1z"/><path fill="#5fff00" d="M546 363h1v1h-1z"/><path fill="#66ff00" d="M547 362h1v1h-1z"/><path fill="#67ff00" d="M548 362h1v1h-1z"/><path fill="#69ff00" d="M549 361h1v1h-1z"/><path fill="#6bff00" d="M550 360h1v1h-1z"/><path fill="#6cff00" d="M551 360h1v1h-1zM722 385h1v1h-1z"/><path fill="#6eff00" d="M552 359h2v1h-2zM720 384h2v1h-2z"/><path fill="#71ff00" d="M554 358h1v1h-1zM716 382h2v1h-2z"/><path fill="#73ff00" d="M555 357h1v1h-1z"/><path fill="#74ff00" d="M556 357h1v1h-1zM712 380h2v1h-2z"/><path fill="#76ff00" d="M557 356h2v1h-2zM707 378h1v1h-1z"/><path fill="#79ff00" d="M559 355h1v1h-1z"/><path fill="#7bff00" d="M560 354h2v1h-2zM703 375h1v1h-1z"/><path fill="#7eff00" d="M562 353h1v1h-1z"/><path fill="#80ff00" d="M563 352h1v1h-1zM699 372h1v1h-1z"/><path fill="#81ff00" d="M564 352h1v1h-1zM700 372h1v1h-1z"/><path fill="#83ff00" d="M565 351h1v1h-1z"/><path fill="#85ff00" d="M566 350h1v1h-1zM695 369h1v1h-1z"/><path fill="#86ff00" d="M567 350h1v1h-1z"/><path fill="#88ff00" d="M568 349h1v1h-1z"/><path fill="#8aff00" d="M569 348h1v1h-1zM691 366h1v1h-1z"/><path fill="#8bff00" d="M570 348h1v1h-1z"/><path fill="#8dff00" d="M571 347h1v1h-1zM689 364h1v1h-1z"/><path fill="#8eff00" d="M572 346h2v1h-2zM688 363h1v1h-1z"/><path fill="#90ff00" d="M574 345h1v1h-1z"/><path fill="#91ff00" d="M575 344h1v1h-1zM686 361h1v1h-1z"/><path fill="#92ff00" d="M576 344h1v1h-1zM685 360h1v1h-1z"/><path fill="#93ff00" d="M577 343h1v1h-1zM684 359h1v1h-1z"/><path fill="#b5ff00" d="M592 319h1v1h-1z"/><path fill="#b3ff00" d="M592 320h1v1h-1zM666 331h1v1h-1z"/><path fill="#b2ff00" d="M591 321h1v1h-1zM666 332h1v1h-1z"/><path fill="#b0ff00" d="M590 322h1v1h-1z"/><path fill="#afff00" d="M590 323h1v1h-1zM667 334h1v1h-1z"/><path fill="#adff00" d="M589 324h1v1h-1zM668 336h1v1h-1z"/><path fill="#acff00" d="M588 325h1v1h-1zM669 337h1v1h-1z"/><path fill="#abff00" d="M588 326h1v1h-1zM669 338h1v1h-1z"/><path fill="#a9ff00" d="M587 327h1v1h-1z"/><path fill="#a8ff00" d="M586 328h1v1h-1zM671 340h1v1h-1z"/><path fill="#a6ff00" d="M586 329h1v1h-1zM672 342h1v1h-1z"/><path fill="#a5ff00" d="M585 330h1v1h-1zM672 343h1v1h-1z"/><path fill="#a4ff00" d="M585 331h1v1h-1zM673 344h1v1h-1z"/><path fill="#a2ff00" d="M584 332h1v1h-1zM673 345h1v1h-1z"/><path fill="#a1ff00" d="M583 333h1v1h-1zM674 346h1v1h-1z"/><path fill="#a0ff00" d="M583 334h1v1h-1zM674 347h1v1h-1z"/><path fill="#9eff00" d="M582 335h1v1h-1zM676 349h1v1h-1z"/><path fill="#9dff00" d="M581 336h1v1h-1zM676 350h1v1h-1z"/><path fill="#9bff00" d="M581 337h1v1h-1z"/><path fill="#9aff00" d="M580 338h1v1h-1zM677 352h1v1h-1z"/><path fill="#99ff00" d="M580 339h1v1h-1zM678 353h1v1h-1z"/><path fill="#97ff00" d="M579 340h1v1h-1zM680 355h1v1h-1z"/><path fill="#96ff00" d="M578 341h1v1h-1zM681 356h1v1h-1z"/><path fill="#94ff00" d="M578 342h1v1h-1zM683 358h1v1h-1z"/><path fill="#ff0600" d="M625 142h2v1h-2zM632 143h1v1h-1z"/><path fill="#ff0c00" d="M625 143h1v1h-1z"/><path fill="#ff1100" d="M625 144h1v1h-1z"/><path fill="#ff1700" d="M625 145h1v1h-1z"/><path fill="#ff1c00" d="M625 146h1v1h-1z"/><path fill="#ff2300" d="M624 147h1v1h-1z"/><path fill="#ff2800" d="M624 148h1v1h-1z"/><path fill="#ff2e00" d="M624 149h1v1h-1z"/><path fill="#ff3300" d="M624 150h1v1h-1z"/><path fill="#ff3900" d="M624 151h1v1h-1z"/><path fill="#ff3f00" d="M623 152h1v1h-1z"/><path fill="#ff4500" d="M623 153h1v1h-1z"/><path fill="#ff4a00" d="M623 154h1v1h-1z"/><path fill="#ff5000" d="M623 155h1v1h-1zM643 158h1v1h-1z"/><path fill="#ff5200" d="M623 156h1v1h-1z"/><path fill="#ff5400" d="M623 157h1v1h-1z"/><path fill="#ff5700" d="M622 158h1v1h-1zM643 161h1v1h-1z"/><path fill="#ff5900" d="M622 159h1v1h-1zM643 162h1v1h-1z"/><path fill="#ff5b00" d="M622 160h1v1h-1zM643 163h1v1h-1z"/><path fill="#ff5d00" d="M622 161h1v1h-1zM643 164h1v1h-1z"/><path fill="#ff5f00" d="M622 162h1v1h-1zM643 165h1v1h-1z"/><path fill="#ff6100" d="M621 163h1v1h-1zM644 166h1v1h-1z"/><path fill="#ff6400" d="M621 164h1v1h-1z"/><path fill="#ff6600" d="M621 165h1v1h-1z"/><path fill="#ff6800" d="M621 166h1v1h-1z"/><path fill="#ff6a00" d="M621 167h1v1h-1z"/><path fill="#ff6c00" d="M621 168h1v1h-1z"/><path fill="#ff6e00" d="M620 169h1v1h-1z"/><path fill="#ff7000" d="M620 170h1v1h-1z"/><path fill="#ff7200" d="M620 171h1v1h-1z"/><path fill="#ff7400" d="M620 172h1v1h-1z"/><path fill="#ff7600" d="M620 173h1v1h-1z"/><path fill="#ff7900" d="M619 174h1v1h-1zM645 178h1v1h-1z"/><path fill="#ff7b00" d="M619 175h1v1h-1zM645 179h1v1h-1z"/><path fill="#ff7d00" d="M619 176h1v1h-1zM645 180h1v1h-1z"/><path fill="#ff7f00" d="M619 177h1v1h-1zM645 181h1v1h-1z"/><path fill="#ff8100" d="M619 178h1v1h-1zM646 182h1v1h-1z"/><path fill="#ff8300" d="M618 179h1v1h-1zM646 183h1v1h-1z"/><path fill="#ff8500" d="M618 180h1v1h-1zM646 184h1v1h-1z"/><path fill="#ff8700" d="M618 181h1v1h-1zM646 185h1v1h-1z"/><path fill="#ff8a00" d="M618 182h1v1h-1z"/><path fill="#ff8c00" d="M618 183h1v1h-1z"/><path fill="#ff8e00" d="M618 184h1v1h-1z"/><path fill="#ff9000" d="M617 185h1v1h-1z"/><path fill="#ff9200" d="M617 186h1v1h-1z"/><path fill="#ff9400" d="M617 187h1v1h-1z"/><path fill="#ff9600" d="M617 188h1v1h-1z"/><path fill="#ff9800" d="M617 189h1v1h-1z"/><path fill="#ff9b00" d="M616 190h1v1h-1z"/><path fill="#ff9d00" d="M616 191h1v1h-1z"/><path fill="#ff9f00" d="M616 192h1v1h-1zM648 197h1v1h-1z"/><path fill="#ffa100" d="M616 193h1v1h-1zM648 198h1v1h-1z"/><path fill="#ffa200" d="M616 194h1v1h-1z"/><path fill="#ffa400" d="M615 195h1v1h-1zM648 200h1v1h-1z"/><path fill="#ffa500" d="M615 196h1v1h-1zM648 201h1v1h-1z"/><path fill="#ffa600" d="M615 197h1v1h-1zM648 202h1v1h-1z"/><path fill="#ffa700" d="M615 198h1v1h-1zM648 203h1v1h-1z"/><path fill="#ffa800" d="M615 199h1v1h-1zM648 204h1v1h-1z"/><path fill="#ffa900" d="M615 200h1v1h-1zM649 205h1v1h-1z"/><path fill="#ffab00" d="M614 201h1v1h-1zM649 206h1v1h-1z"/><path fill="#ffac00" d="M614 202h1v1h-1zM649 207h1v1h-1z"/><path fill="#ffad00" d="M614 203h1v1h-1zM649 208h1v1h-1z"/><path fill="#ffae00" d="M614 204h1v1h-1zM649 209h1v1h-1z"/><path fill="#ffb000" d="M614 205h1v1h-1zM649 211h1v1h-1z"/><path fill="#ffb100" d="M613 206h1v1h-1zM650 212h1v1h-1z"/><path fill="#ffb200" d="M613 207h1v1h-1z"/><path fill="#ffb300" d="M613 208h1v1h-1zM650 213h1v1h-1z"/><path fill="#ffb400" d="M613 209h1v1h-1zM650 214h1v1h-1z"/><path fill="#ffb600" d="M613 210h1v1h-1zM650 216h1v1h-1z"/><path fill="#ffb700" d="M612 211h1v1h-1zM650 217h1v1h-1z"/><path fill="#ffb800" d="M612 212h1v1h-1z"/><path fill="#ffb900" d="M612 213h1v1h-1zM650 218h1v1h-1z"/><path fill="#ffba00" d="M612 214h1v1h-1zM650 219h1v1h-1z"/><path fill="#ffbc00" d="M612 215h1v1h-1zM651 221h1v1h-1z"/><path fill="#ffbd00" d="M612 216h1v1h-1zM651 222h1v1h-1z"/><path fill="#ffbe00" d="M611 217h1v1h-1zM651 223h1v1h-1z"/><path fill="#ffbf00" d="M611 218h1v1h-1zM651 224h1v1h-1z"/><path fill="#ffc000" d="M611 219h1v1h-1z"/><path fill="#ffc200" d="M611 220h1v1h-1zM651 226h1v1h-1z"/><path fill="#ffc300" d="M611 221h1v1h-1zM651 227h1v1h-1z"/><path fill="#ffc400" d="M610 222h1v1h-1zM652 228h1v1h-1z"/><path fill="#ffc500" d="M610 223h1v1h-1zM652 229h1v1h-1z"/><path fill="#ffc600" d="M610 224h1v1h-1zM652 230h1v1h-1z"/><path fill="#ffc800" d="M610 225h1v1h-1z"/><path fill="#ffc900" d="M610 226h1v1h-1zM652 232h1v1h-1z"/><path fill="#ffca00" d="M609 227h1v1h-1zM652 233h1v1h-1z"/><path fill="#ffcb00" d="M609 228h1v1h-1zM652 234h1v1h-1z"/><path fill="#ffcc00" d="M609 229h1v1h-1zM652 235h1v1h-1z"/><path fill="#ffce00" d="M609 230h1v1h-1zM653 237h1v1h-1z"/><path fill="#ffcf00" d="M609 231h1v1h-1zM653 238h1v1h-1z"/><path fill="#ffd000" d="M609 232h1v1h-1z"/><path fill="#ffd100" d="M608 233h1v1h-1zM653 239h1v1h-1z"/><path fill="#ffd200" d="M608 234h1v1h-1zM653 240h1v1h-1z"/><path fill="#ffd400" d="M608 235h1v1h-1zM653 242h1v1h-1z"/><path fill="#ffd500" d="M608 236h1v1h-1zM654 243h1v1h-1z"/><path fill="#ffd600" d="M608 237h1v1h-1zM654 244h1v1h-1z"/><path fill="#ffd700" d="M607 238h1v1h-1zM654 245h1v1h-1z"/><path fill="#ffd900" d="M607 239h1v1h-1zM654 246h1v1h-1z"/><path fill="#ffda00" d="M607 240h1v1h-1zM654 247h1v1h-1z"/><path fill="#ffdb00" d="M607 241h1v1h-1zM654 248h1v1h-1z"/><path fill="#ffdc00" d="M607 242h1v1h-1zM654 249h1v1h-1z"/><path fill="#ffdd00" d="M607 243h1v1h-1zM654 250h1v1h-1z"/><path fill="#ffdf00" d="M606 244h1v1h-1zM655 252h1v1h-1z"/><path fill="#ffe000" d="M606 245h1v1h-1z"/><path fill="#ffe100" d="M606 246h1v1h-1zM655 253h1v1h-1z"/><path fill="#ffe200" d="M606 247h1v1h-1zM655 254h1v1h-1z"/><path fill="#ffe300" d="M606 248h1v1h-1zM655 255h1v1h-1z"/><path fill="#ffe500" d="M605 249h1v1h-1zM655 257h1v1h-1z"/><path fill="#ffe600" d="M605 250h1v1h-1zM655 258h1v1h-1z"/><path fill="#ffe700" d="M605 251h1v1h-1zM656 259h1v1h-1z"/><path fill="#ffe800" d="M605 252h1v1h-1z"/><path fill="#ffe900" d="M605 253h1v1h-1zM656 260h1v1h-1z"/><path fill="#ffeb00" d="M604 254h1v1h-1zM656 262h1v1h-1z"/><path fill="#ffec00" d="M604 255h1v1h-1zM656 263h1v1h-1z"/><path fill="#ffed00" d="M604 256h1v1h-1zM656 264h1v1h-1z"/><path fill="#ffee00" d="M604 257h1v1h-1z"/><path fill="#fff000" d="M604 258h1v1h-1zM656 266h1v1h-1z"/><path fill="#fff100" d="M604 259h1v1h-1zM657 267h1v1h-1z"/><path fill="#fff300" d="M603 260h1v1h-1zM657 268h1v1h-1z"/><path fill="#fff400" d="M603 261h1v1h-1zM657 269h1v1h-1z"/><path fill="#fff600" d="M603 262h1v1h-1zM657 270h1v1h-1z"/><path fill="#fff700" d="M603 263h1v1h-1zM657 271h1v1h-1z"/><path fill="#fff800" d="M603 264h1v1h-1zM657 272h1v1h-1z"/><path fill="#fffa00" d="M602 265h1v1h-1zM657 273h1v1h-1z"/><path fill="#fffb00" d="M602 266h1v1h-1zM658 274h1v1h-1z"/><path fill="#fffd00" d="M602 267h1v1h-1zM658 275h1v1h-1z"/><path fill="#fffe00" d="M602 268h1v1h-1zM658 276h1v1h-1z"/><path fill="#feff00" d="M602 269h1v1h-1z"/><path fill="#fdff00" d="M601 270h1v1h-1zM658 278h1v1h-1z"/><path fill="#fbff00" d="M601 271h1v1h-1z"/><path fill="#faff00" d="M601 272h1v1h-1zM658 280h1v1h-1z"/><path fill="#f8ff00" d="M601 273h1v1h-1zM659 282h1v1h-1z"/><path fill="#f7ff00" d="M601 274h1v1h-1z"/><path fill="#f5ff00" d="M601 275h1v1h-1zM659 284h1v1h-1z"/><path fill="#f4ff00" d="M600 276h1v1h-1z"/><path fill="#f2ff00" d="M600 277h1v1h-1zM659 286h1v1h-1z"/><path fill="#f1ff00" d="M600 278h1v1h-1zM659 287h1v1h-1z"/><path fill="#f0ff00" d="M600 279h1v1h-1z"/><path fill="#eeff00" d="M600 280h1v1h-1zM659 289h1v1h-1z"/><path fill="#ecff00" d="M599 281h1v1h-1zM660 290h1v1h-1z"/><path fill="#ebff00" d="M599 282h1v1h-1zM660 291h1v1h-1z"/><path fill="#eaff00" d="M599 283h1v1h-1zM660 292h1v1h-1z"/><path fill="#e8ff00" d="M599 284h1v1h-1zM660 293h1v1h-1z"/><path fill="#e7ff00" d="M599 285h1v1h-1zM660 294h1v1h-1z"/><path fill="#e5ff00" d="M598 286h1v1h-1zM660 295h1v1h-1z"/><path fill="#e4ff00" d="M598 287h1v1h-1zM660 296h1v1h-1z"/><path fill="#e2ff00" d="M598 288h1v1h-1z"/><path fill="#e1ff00" d="M598 289h1v1h-1zM661 298h1v1h-1z"/><path fill="#dfff00" d="M598 290h1v1h-1z"/><path fill="#deff00" d="M598 291h1v1h-1zM661 300h1v1h-1z"/><path fill="#dcff00" d="M597 292h1v1h-1z"/><path fill="#dbff00" d="M597 293h1v1h-1zM661 302h1v1h-1z"/><path fill="#d9ff00" d="M597 294h1v1h-1zM661 304h1v1h-1z"/><path fill="#d8ff00" d="M597 295h1v1h-1z"/><path fill="#d7ff00" d="M597 296h1v1h-1zM662 305h1v1h-1z"/><path fill="#d5ff00" d="M596 297h1v1h-1zM662 307h1v1h-1z"/><path fill="#d3ff00" d="M596 298h1v1h-1zM662 308h1v1h-1z"/><path fill="#d2ff00" d="M596 299h1v1h-1zM662 309h1v1h-1z"/><path fill="#d1ff00" d="M596 300h1v1h-1z"/><path fill="#cfff00" d="M596 301h1v1h-1zM662 311h1v1h-1z"/><path fill="#ceff00" d="M595 302h1v1h-1z"/><path fill="#ccff00" d="M595 303h1v1h-1zM663 313h1v1h-1z"/><path fill="#cbff00" d="M595 304h1v1h-1zM663 314h1v1h-1z"/><path fill="#c9ff00" d="M595 305h1v1h-1zM663 315h1v1h-1z"/><path fill="#c8ff00" d="M595 306h1v1h-1zM663 316h1v1h-1z"/><path fill="#c6ff00" d="M595 307h1v1h-1zM663 317h1v1h-1z"/><path fill="#c5ff00" d="M594 308h1v1h-1zM663 318h1v1h-1z"/><path fill="#c3ff00" d="M594 309h1v1h-1z"/><path fill="#c2ff00" d="M594 310h1v1h-1zM663 320h1v1h-1z"/><path fill="#c0ff00" d="M594 311h1v1h-1z"/><path fill="#bfff00" d="M594 312h1v1h-1zM664 322h1v1h-1z"/><path fill="#bdff00" d="M593 313h1v1h-1zM664 324h1v1h-1z"/><path fill="#bcff00" d="M593 314h1v1h-1z"/><path fill="#baff00" d="M593 315h1v1h-1zM664 326h1v1h-1z"/><path fill="#b9ff00" d="M593 316h1v1h-1z"/><path fill="#b8ff00" d="M593 317h1v1h-1zM664 327h1v1h-1z"/><path fill="#b6ff00" d="M593 318h1v1h-1zM665 329h1v1h-1z"/><path fill="#ff0500" d="M627 142h1v1h-1zM633 143h2v1h-2z"/><path fill="#ff0400" d="M628 142h1v1h-1zM635 143h1v1h-1zM641 144h1v1h-1z"/><path fill="#ff0300" d="M629 142h1v1h-1zM636 143h1v1h-1z"/><path fill="#ff0200" d="M630 142h1v1h-1zM637 143h1v1h-1z"/><path fill="#ff0700" d="M631 143h1v1h-1z"/><path fill="#ff0100" d="M638 143h2v1h-2z"/><path fill="#ff0000" d="M640 143h2v1h-2z"/><path fill="#ff0a00" d="M641 145h1v1h-1z"/><path fill="#ff0f00" d="M641 146h1v1h-1z"/><path fill="#ff1500" d="M641 147h1v1h-1z"/><path fill="#ff1a00" d="M641 148h1v1h-1z"/><path fill="#ff2000" d="M641 149h1v1h-1z"/><path fill="#ff2600" d="M641 150h1v1h-1z"/><path fill="#ff2a00" d="M642 151h1v1h-1z"/><path fill="#ff3000" d="M642 152h1v1h-1z"/><path fill="#ff3500" d="M642 153h1v1h-1z"/><path fill="#ff3b00" d="M642 154h1v1h-1z"/><path fill="#ff4000" d="M642 155h1v1h-1z"/><path fill="#ff4600" d="M642 156h1v1h-1z"/><path fill="#ff4b00" d="M642 157h1v1h-1z"/><path fill="#ff5300" d="M643 159h1v1h-1z"/><path fill="#ff5500" d="M643 160h1v1h-1z"/><path fill="#ff6300" d="M644 167h1v1h-1z"/><path fill="#ff6500" d="M644 168h1v1h-1z"/><path fill="#ff6700" d="M644 169h1v1h-1z"/><path fill="#ff6900" d="M644 170h1v1h-1z"/><path fill="#ff6b00" d="M644 171h1v1h-1z"/><path fill="#ff6d00" d="M644 172h1v1h-1z"/><path fill="#ff6f00" d="M644 173h1v1h-1z"/><path fill="#ff7100" d="M645 174h1v1h-1z"/><path fill="#ff7300" d="M645 175h1v1h-1z"/><path fill="#ff7500" d="M645 176h1v1h-1z"/><path fill="#ff7700" d="M645 177h1v1h-1z"/><path fill="#ff8900" d="M646 186h1v1h-1z"/><path fill="#ff8b00" d="M646 187h1v1h-1z"/><path fill="#ff8d00" d="M646 188h1v1h-1z"/><path fill="#ff8f00" d="M647 189h1v1h-1z"/><path fill="#ff9100" d="M647 190h1v1h-1z"/><path fill="#ff9300" d="M647 191h1v1h-1z"/><path fill="#ff9500" d="M647 192h1v1h-1z"/><path fill="#ff9700" d="M647 193h1v1h-1z"/><path fill="#ff9900" d="M647 194h1v1h-1z"/><path fill="#ff9c00" d="M647 195h1v1h-1z"/><path fill="#ff9e00" d="M647 196h1v1h-1z"/><path fill="#ffa300" d="M648 199h1v1h-1z"/><path fill="#ffaf00" d="M649 210h1v1h-1z"/><path fill="#ffb500" d="M650 215h1v1h-1z"/><path fill="#ffbb00" d="M651 220h1v1h-1z"/><path fill="#ffc100" d="M651 225h1v1h-1z"/><path fill="#ffc700" d="M652 231h1v1h-1z"/><path fill="#ffcd00" d="M653 236h1v1h-1z"/><path fill="#ffd300" d="M653 241h1v1h-1z"/><path fill="#ffde00" d="M655 251h1v1h-1z"/><path fill="#ffe400" d="M655 256h1v1h-1z"/><path fill="#ffea00" d="M656 261h1v1h-1z"/><path fill="#ffef00" d="M656 265h1v1h-1z"/><path fill="#ffff00" d="M658 277h1v1h-1z"/><path fill="#fcff00" d="M658 279h1v1h-1z"/><path fill="#f9ff00" d="M658 281h1v1h-1z"/><path fill="#f6ff00" d="M659 283h1v1h-1z"/><path fill="#f3ff00" d="M659 285h1v1h-1z"/><path fill="#efff00" d="M659 288h1v1h-1z"/><path fill="#e3ff00" d="M661 297h1v1h-1z"/><path fill="#e0ff00" d="M661 299h1v1h-1z"/><path fill="#ddff00" d="M661 301h1v1h-1z"/><path fill="#daff00" d="M661 303h1v1h-1z"/><path fill="#d6ff00" d="M662 306h1v1h-1z"/><path fill="#d0ff00" d="M662 310h1v1h-1z"/><path fill="#cdff00" d="M662 312h1v1h-1z"/><path fill="#c4ff00" d="M663 319h1v1h-1z"/><path fill="#c1ff00" d="M664 321h1v1h-1z"/><path fill="#beff00" d="M664 323h1v1h-1z"/><path fill="#bbff00" d="M664 325h1v1h-1z"/><path fill="#b7ff00" d="M665 328h1v1h-1z"/><path fill="#b4ff00" d="M665 330h1v1h-1z"/><path fill="#b1ff00" d="M667 333h1v1h-1z"/><path fill="#aeff00" d="M668 335h1v1h-1z"/><path fill="#aaff00" d="M670 339h1v1h-1z"/><path fill="#a7ff00" d="M671 341h1v1h-1z"/><path fill="#9fff00" d="M675 348h1v1h-1z"/><path fill="#9cff00" d="M677 351h1v1h-1z"/><path fill="#98ff00" d="M678 354h2v1h-2z"/><path fill="#95ff00" d="M682 357h1v1h-1z"/><path fill="#8fff00" d="M687 362h1v1h-1z"/><path fill="#8cff00" d="M690 365h1v1h-1z"/><path fill="#89ff00" d="M692 367h2v1h-2z"/><path fill="#87ff00" d="M694 368h1v1h-1z"/><path fill="#84ff00" d="M696 370h2v1h-2z"/><path fill="#82ff00" d="M698 371h1v1h-1z"/><path fill="#7fff00" d="M701 373h1v1h-1z"/><path fill="#7dff00" d="M702 374h1v1h-1z"/><path fill="#7cff00" d="M704 375h1v1h-1z"/><path fill="#7aff00" d="M705 376h1v1h-1z"/><path fill="#78ff00" d="M706 377h1v1h-1z"/><path fill="#77ff00" d="M708 378h2v1h-2z"/><path fill="#75ff00" d="M710 379h2v1h-2z"/><path fill="#72ff00" d="M714 381h2v1h-2z"/><path fill="#6fff00" d="M718 383h2v1h-2z"/><path fill="#ffffff" d="M285 196h1v1h-1zM284 197h2v1h-2zM282 198h2v1h-2zM285 198h1v1h-1zM284 199h2v1h-2zM284 200h1v1h-1zM284 201h1v1h-1zM284 202h1v1h-1zM284 203h1v1h-1zM284 204h1v1h-1zM284 205h1v1h-1zM284 206h1v1h-1zM284 207h1v1h-1zM284 208h1v1h-1zM284 209h1v1h-1zM284 210h1v1h-1zM218 286h1v1h-1zM219 287h7v1h-7zM226 288h5v1h-5zM222 292h1v1h-1zM223 293h8v1h-8zM222 294h1v1h-1zM229 294h1v1h-1zM221 295h1v1h-1zM229 295h1v1h-1zM221 296h1v1h-1zM230 296h1v1h-1zM221 297h1v1h-1zM230 297h1v1h-1zM222 298h1v1h-1zM230 298h1v1h-1zM222 299h1v1h-1zM229 299h1v1h-1zM223 300h1v1h-1zM229 300h1v1h-1zM224 301h5v1h-5zM216 305h3v1h-3zM216 306h2v1h-2zM221 306h5v1h-5zM226 307h5v1h-5zM221 311h1v1h-1zM229 311h1v1h-1zM221 312h1v1h-1zM229 312h1v1h-1zM217 313h13v1h-13zM221 314h1v1h-1zM221 315h1v1h-1zM221 316h1v1h-1zM222 320h4v1h-4zM221 321h1v1h-1zM226 321h4v1h-4zM221 322h1v1h-1zM221 323h1v1h-1zM221 324h1v1h-1zM221 325h1v1h-1zM221 326h1v1h-1zM279 326h4v1h-4zM222 327h1v1h-1zM279 327h1v1h-1zM282 327h1v1h-1zM221 328h6v1h-6zM278 328h1v1h-1zM283 328h1v1h-1zM227 329h3v1h-3zM277 329h1v1h-1zM284 329h1v1h-1zM277 330h1v1h-1zM284 330h1v1h-1zM277 331h1v1h-1zM284 331h1v1h-1zM276 332h2v1h-2zM284 332h1v1h-1zM222 333h3v1h-3zM227 333h1v1h-1zM276 333h1v1h-1zM284 333h1v1h-1zM221 334h1v1h-1zM224 334h1v1h-1zM227 334h1v1h-1zM276 334h1v1h-1zM284 334h1v1h-1zM220 335h1v1h-1zM224 335h1v1h-1zM228 335h1v1h-1zM276 335h2v1h-2zM284 335h1v1h-1zM220 336h1v1h-1zM224 336h1v1h-1zM229 336h1v1h-1zM277 336h1v1h-1zM284 336h1v1h-1zM220 337h1v1h-1zM224 337h1v1h-1zM229 337h1v1h-1zM277 337h1v1h-1zM284 337h1v1h-1zM221 338h1v1h-1zM224 338h1v1h-1zM229 338h1v1h-1zM277 338h1v1h-1zM284 338h1v1h-1zM221 339h1v1h-1zM224 339h1v1h-1zM229 339h1v1h-1zM277 339h2v1h-2zM283 339h2v1h-2zM222 340h1v1h-1zM224 340h1v1h-1zM228 340h1v1h-1zM279 340h5v1h-5zM223 341h2v1h-2zM226 341h2v1h-2zM224 342h2v1h-2zM220 345h1v1h-1zM220 346h1v1h-1zM228 346h1v1h-1zM216 347h2v1h-2zM220 347h1v1h-1zM228 347h1v1h-1zM218 348h7v1h-7zM228 348h1v1h-1zM220 349h1v1h-1zM225 349h4v1h-4zM220 350h1v1h-1zM222 354h4v1h-4zM221 355h1v1h-1zM226 355h1v1h-1zM220 356h1v1h-1zM227 356h1v1h-1zM220 357h1v1h-1zM228 357h1v1h-1zM220 358h1v1h-1zM228 358h1v1h-1zM220 359h1v1h-1zM228 359h1v1h-1zM220 360h1v1h-1zM228 360h1v1h-1zM220 361h1v1h-1zM228 361h1v1h-1zM221 362h1v1h-1zM227 362h1v1h-1zM223 363h4v1h-4zM221 368h5v1h-5zM220 369h1v1h-1zM226 369h1v1h-1zM219 370h1v1h-1zM227 370h1v1h-1zM219 371h1v1h-1zM228 371h1v1h-1zM219 372h1v1h-1zM228 372h1v1h-1zM219 373h1v1h-1zM228 373h1v1h-1zM219 374h1v1h-1zM228 374h1v1h-1zM220 375h1v1h-1zM227 375h1v1h-1zM219 376h8v1h-8zM227 377h6v1h-6zM277 457h1v1h-1zM276 458h2v1h-2zM275 459h1v1h-1zM277 459h1v1h-1zM277 460h1v1h-1zM277 461h1v1h-1zM261 462h5v1h-5zM277 462h1v1h-1zM266 463h6v1h-6zM277 463h1v1h-1zM277 464h1v1h-1zM277 465h1v1h-1zM277 466h1v1h-1zM277 467h1v1h-1zM277 468h1v1h-1zM277 469h1v1h-1zM277 470h1v1h-1zM282 606h5v1h-5zM280 607h2v1h-2zM287 607h2v1h-2zM279 608h1v1h-1zM289 608h1v1h-1zM278 609h2v1h-2zM289 609h2v1h-2zM278 610h1v1h-1zM290 610h1v1h-1zM278 611h1v1h-1zM290 611h1v1h-1zM278 612h2v1h-2zM289 612h2v1h-2zM279 613h1v1h-1zM289 613h1v1h-1zM280 614h2v1h-2zM287 614h2v1h-2zM282 615h5v1h-5zM278 621h1v1h-1zM390 621h4v1h-4zM279 622h7v1h-7zM384 622h1v1h-1zM389 622h1v1h-1zM394 622h1v1h-1zM280 623h1v1h-1zM286 623h4v1h-4zM384 623h1v1h-1zM388 623h1v1h-1zM395 623h1v1h-1zM280 624h1v1h-1zM384 624h1v1h-1zM388 624h1v1h-1zM395 624h1v1h-1zM384 625h1v1h-1zM388 625h1v1h-1zM395 625h1v1h-1zM384 626h1v1h-1zM388 626h1v1h-1zM395 626h1v1h-1zM384 627h1v1h-1zM388 627h1v1h-1zM395 627h1v1h-1zM384 628h5v1h-5zM395 628h1v1h-1zM284 629h1v1h-1zM395 629h1v1h-1zM284 630h1v1h-1zM389 630h1v1h-1zM395 630h1v1h-1zM284 631h1v1h-1zM392 631h3v1h-3zM284 632h1v1h-1zM284 633h1v1h-1zM390 633h1v1h-1zM284 634h1v1h-1zM390 634h1v1h-1zM284 635h1v1h-1zM390 635h1v1h-1zM284 636h1v1h-1zM390 636h1v1h-1zM284 637h1v1h-1zM390 637h1v1h-1zM494 637h5v1h-5zM284 638h1v1h-1zM390 638h1v1h-1zM492 638h2v1h-2zM499 638h2v1h-2zM284 639h1v1h-1zM390 639h1v1h-1zM491 639h2v1h-2zM500 639h2v1h-2zM284 640h1v1h-1zM390 640h1v1h-1zM490 640h2v1h-2zM501 640h2v1h-2zM284 641h1v1h-1zM390 641h1v1h-1zM490 641h1v1h-1zM502 641h1v1h-1zM284 642h1v1h-1zM390 642h1v1h-1zM490 642h1v1h-1zM502 642h1v1h-1zM390 643h1v1h-1zM490 643h1v1h-1zM502 643h1v1h-1zM390 644h1v1h-1zM490 644h2v1h-2zM501 644h2v1h-2zM491 645h2v1h-2zM500 645h2v1h-2zM492 646h2v1h-2zM499 646h2v1h-2zM494 647h5v1h-5zM596 653h1v1h-1zM601 653h6v1h-6zM596 654h1v1h-1zM601 654h1v1h-1zM606 654h1v1h-1zM596 655h1v1h-1zM600 655h1v1h-1zM607 655h1v1h-1zM596 656h1v1h-1zM600 656h1v1h-1zM607 656h1v1h-1zM596 657h1v1h-1zM600 657h1v1h-1zM607 657h1v1h-1zM596 658h1v1h-1zM600 658h1v1h-1zM607 658h1v1h-1zM596 659h1v1h-1zM600 659h1v1h-1zM607 659h1v1h-1zM597 660h4v1h-4zM607 660h1v1h-1zM600 661h1v1h-1zM607 661h1v1h-1zM605 662h3v1h-3zM863 663h1v1h-1zM868 663h1v1h-1zM864 664h1v1h-1zM867 664h1v1h-1zM864 665h1v1h-1zM866 665h1v1h-1zM865 666h2v1h-2zM865 667h1v1h-1zM706 668h4v1h-4zM865 668h1v1h-1zM704 669h2v1h-2zM710 669h3v1h-3zM865 669h1v1h-1zM703 670h1v1h-1zM712 670h1v1h-1zM865 670h1v1h-1zM702 671h2v1h-2zM713 671h1v1h-1zM865 671h1v1h-1zM702 672h1v1h-1zM713 672h1v1h-1zM702 673h1v1h-1zM713 673h1v1h-1zM702 674h1v1h-1zM713 674h1v1h-1zM703 675h1v1h-1zM712 675h2v1h-2zM704 676h2v1h-2zM711 676h2v1h-2zM705 677h6v1h-6zM862 677h1v1h-1zM862 678h2v1h-2zM861 679h3v1h-3zM861 680h2v1h-2zM864 680h1v1h-1zM860 681h1v1h-1zM862 681h1v1h-1zM864 681h1v1h-1zM860 682h1v1h-1zM862 682h1v1h-1zM865 682h1v1h-1zM859 683h1v1h-1zM862 683h1v1h-1zM866 683h1v1h-1zM702 684h1v1h-1zM862 684h1v1h-1zM702 685h6v1h-6zM862 685h1v1h-1zM704 686h1v1h-1zM708 686h7v1h-7zM862 686h1v1h-1zM704 687h1v1h-1zM862 687h1v1h-1zM862 688h1v1h-1zM862 689h1v1h-1zM862 690h1v1h-1zM862 691h1v1h-1zM862 692h1v1h-1zM862 693h1v1h-1zM862 694h1v1h-1zM862 695h1v1h-1zM862 696h1v1h-1zM862 697h1v1h-1zM862 698h1v1h-1zM862 699h1v1h-1zM862 700h1v1h-1zM862 701h1v1h-1zM862 702h1v1h-1zM862 703h1v1h-1zM862 704h1v1h-1zM496 705h1v1h-1zM862 705h1v1h-1zM497 706h1v1h-1zM503 706h1v1h-1zM862 706h1v1h-1zM497 707h1v1h-1zM502 707h1v1h-1zM862 707h1v1h-1zM498 708h1v1h-1zM501 708h1v1h-1zM862 708h1v1h-1zM499 709h1v1h-1zM501 709h1v1h-1zM862 709h1v1h-1zM499 710h2v1h-2zM849 710h1v1h-1zM860 710h6v1h-6zM884 710h1v1h-1zM499 711h2v1h-2zM847 711h2v1h-2zM854 711h6v1h-6zM866 711h9v1h-9zM885 711h1v1h-1zM498 712h1v1h-1zM500 712h1v1h-1zM846 712h1v1h-1zM850 712h4v1h-4zM875 712h6v1h-6zM886 712h2v1h-2zM498 713h1v1h-1zM501 713h1v1h-1zM844 713h6v1h-6zM881 713h5v1h-5zM888 713h1v1h-1zM497 714h1v1h-1zM502 714h1v1h-1zM843 714h3v1h-3zM886 714h5v1h-5zM496 715h1v1h-1zM502 715h1v1h-1zM844 715h3v1h-3zM886 715h3v1h-3zM503 716h1v1h-1zM847 716h3v1h-3zM884 716h2v1h-2zM850 717h1v1h-1zM883 717h1v1h-1zM894 719h1v1h-1zM898 719h1v1h-1zM831 720h6v1h-6zM894 720h1v1h-1zM898 720h1v1h-1zM835 721h1v1h-1zM895 721h1v1h-1zM897 721h1v1h-1zM835 722h1v1h-1zM895 722h1v1h-1zM897 722h1v1h-1zM834 723h1v1h-1zM896 723h1v1h-1zM834 724h1v1h-1zM895 724h1v1h-1zM897 724h1v1h-1zM833 725h1v1h-1zM895 725h1v1h-1zM897 725h1v1h-1zM832 726h1v1h-1zM894 726h1v1h-1zM898 726h1v1h-1zM832 727h1v1h-1zM894 727h1v1h-1zM898 727h1v1h-1zM831 728h6v1h-6z"/></g></svg>
</body></html>
